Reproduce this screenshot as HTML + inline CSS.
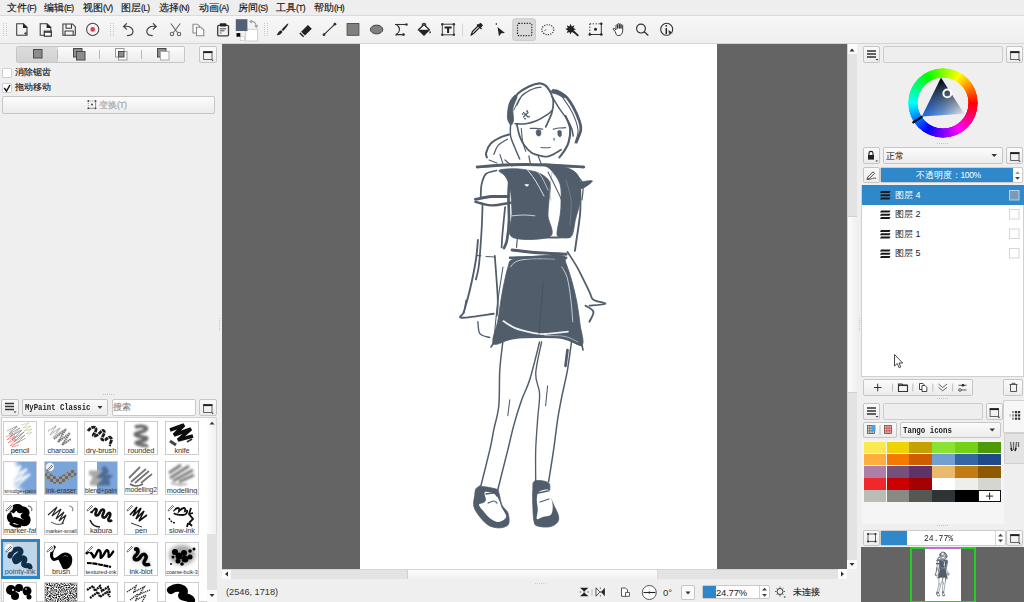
<!DOCTYPE html>
<html><head><meta charset="utf-8">
<style>
*{margin:0;padding:0;box-sizing:border-box}
html,body{width:1024px;height:602px;overflow:hidden;background:#efefef;font-family:"Liberation Sans",sans-serif;font-size:10px;color:#141414;position:relative}
.t{-webkit-text-stroke:0.15px currentColor}
.n{-webkit-text-stroke:0}
.a{position:absolute}
.btn{position:absolute;border:1px solid #c6c6c6;border-radius:2px;background:linear-gradient(#fbfbfb,#ececec)}
.fld{position:absolute;border:1px solid #c6c6c6;border-radius:2px;background:#fff}
.t{position:absolute;white-space:nowrap;line-height:1}
.k{font-size:8.6px;letter-spacing:-0.7px}
svg{position:absolute;overflow:visible}
</style></head><body>
<!-- menubar -->
<div class="a" style="left:0;top:0;width:1024px;height:16px;background:#eeeeee;border-bottom:1px solid #dadada"></div>
<div id="menu" style="font-size:9.6px">
<span class="t" style="left:7px;top:3px">文件<span class="k">(F)</span></span>
<span class="t" style="left:44px;top:3px">编辑<span class="k">(E)</span></span>
<span class="t" style="left:83px;top:3px">视图<span class="k">(V)</span></span>
<span class="t" style="left:121px;top:3px">图层<span class="k">(L)</span></span>
<span class="t" style="left:159px;top:3px">选择<span class="k">(N)</span></span>
<span class="t" style="left:199px;top:3px">动画<span class="k">(A)</span></span>
<span class="t" style="left:238px;top:3px">房间<span class="k">(S)</span></span>
<span class="t" style="left:276px;top:3px">工具<span class="k">(T)</span></span>
<span class="t" style="left:314px;top:3px">帮助<span class="k">(H)</span></span>
</div>
<!-- toolbar -->
<div class="a" style="left:0;top:16px;width:1024px;height:28px;background:linear-gradient(#f7f7f7,#efefef);border-bottom:1px solid #d4d4d4"></div>

<!-- canvas -->
<div class="a" style="left:222px;top:44px;width:625px;height:525px;background:#646464"></div>
<div class="a" style="left:360px;top:44px;width:357px;height:525px;background:#fff"></div>
<svg style="left:0;top:0" width="1024" height="602" viewBox="0 0 1024 602">
<g fill="none" stroke="#c8c8c8" stroke-width="1" stroke-dasharray="1 1">
<path d="M3.5 23V36M6.5 23V36"/>
<path d="M110.5 23V36M113.5 23V36"/>
<path d="M264.5 23V36M267.5 23V36"/>
</g>
<g fill="none" stroke="#3a3a3a" stroke-width="1.05" stroke-linejoin="miter">
<path d="M16.7 23.7H23.5L27 27.2V35.3H16.7Z"/>
<path d="M40.2 23.7H47L50.8 27.2V35.3H40.2Z"/>
<path d="M62.9 23.9H72.5L75.3 26.7V35.3H62.9Z"/>
<path d="M66 24V28.3H71.5V24"/>
<path d="M65 35.3V31H73.2V35.3"/>
<circle cx="92.7" cy="29.4" r="6.1" stroke="#454545"/>
</g>
<path d="M23 23.3L27.4 27.7V28H23Z" fill="#222"/>
<path d="M46.6 23.3L51.2 27.7V28H46.6Z" fill="#222"/>
<path d="M24.2 33.3H27.4M25.8 31.8V35" stroke="#555" stroke-width="1.2"/>
<rect x="44.3" y="31.2" width="7" height="5" fill="#fff" stroke="#333" stroke-width="1.2"/>
<path d="M44.3 32.2H51.3" stroke="#333" stroke-width="1.2"/>
<circle cx="92.7" cy="29.4" r="2.3" fill="#e23a50"/>
<!-- undo/redo -->
<g fill="none" stroke="#3a3a3a" stroke-width="1.15" stroke-linecap="round">
<path d="M124 26.5C130 25.5 133 28.5 133 31.3C133 34 131 35.6 127.5 35.6"/>
<path d="M126.5 23.6L123.6 26.5L126.5 29.2"/>
<path d="M155.8 26.5C149.8 25.5 146.8 28.5 146.8 31.3C146.8 34 148.8 35.6 152.3 35.6"/>
<path d="M153.3 23.6L156.2 26.5L153.3 29.2"/>
</g>
<!-- cut -->
<g fill="none" stroke="#666" stroke-width="1.1">
<path d="M170.8 23.5L177.5 32.5M180.2 23.5L173.5 32.5"/>
<circle cx="172" cy="34" r="1.7"/><circle cx="179" cy="34" r="1.7"/>
</g>
<!-- copy -->
<g fill="#fafafa" stroke="#8a8a8a" stroke-width="1.1">
<path d="M193 24.2H197.5L199.5 26.2V33H193Z"/>
<path d="M196.5 27.2H201L203.8 30V35.8H196.5Z"/>
</g>
<!-- paste -->
<rect x="217.7" y="25.3" width="10.8" height="10.5" rx="1" fill="#f4f4f4" stroke="#3a3a3a" stroke-width="1.3"/>
<rect x="219.8" y="23.3" width="6.6" height="3.2" rx="0.8" fill="#222"/>
<path d="M219.8 28.8H226.2M219.8 30.8H224.5" stroke="#444" stroke-width="1"/>
<path d="M219.8 33H221.6" stroke="#777" stroke-width="1.2"/>
<!-- colors -->
<rect x="245.6" y="29.3" width="12" height="11.7" fill="#fff" stroke="#d0d0d0" stroke-width="1"/>
<rect x="235.8" y="19.2" width="11.6" height="11.8" fill="#536073"/>
<rect x="240.3" y="36.6" width="4.2" height="4" fill="#fff" stroke="#cfcfcf" stroke-width="0.8"/>
<rect x="236.5" y="33.1" width="3.8" height="3.6" fill="#000"/>
<g fill="none" stroke="#a0a0a0" stroke-width="1.2">
<path d="M250.5 21.5C253.5 21.2 256 22 256.3 26.5"/>
<path d="M251.8 20.2L250 21.6L251.8 23M254.8 25.2L256.3 27.2L257.8 25.2"/>
</g>
<!-- brush -->
<path d="M288.3 23.5C287.8 23.2 285.5 25.2 281.6 29.7L283.1 31.1C286.5 27.6 288.7 24 288.3 23.5Z" fill="#222"/>
<path d="M281.1 30.3L282.5 31.7C281.8 33.5 279.5 35.2 276.8 35.3C277.5 33.5 279 31 281.1 30.3Z" fill="#222"/>
<!-- eraser -->
<path d="M307.9 24.9L311.8 28.8L305 35.6L301.1 31.7Z" fill="#222"/>
<path d="M300.4 32.5L304.2 36.3L303.2 37.2L299.3 33.4Z" fill="#222"/>
<!-- line -->
<path d="M324 34.7L334.9 24.2" stroke="#333" stroke-width="1.1"/>
<circle cx="324" cy="34.7" r="1.4" fill="#333"/><circle cx="334.9" cy="24.2" r="1.4" fill="#333"/>
<!-- rect -->
<rect x="347.1" y="23.5" width="11.8" height="11.8" fill="#808080" stroke="#555" stroke-width="1"/>
<ellipse cx="376.6" cy="29.5" rx="6.2" ry="4.4" fill="#808080" stroke="#444" stroke-width="1"/>
<!-- path -->
<g fill="none" stroke="#333" stroke-width="1.1">
<path d="M395 24.5H406.5"/>
<path d="M396.5 24.5C400.5 27.5 400.5 31.5 396.5 34.6H403.5"/>
</g>
<circle cx="406.5" cy="24.5" r="1.2" fill="#333"/><circle cx="403.5" cy="34.6" r="1.4" fill="#333"/><circle cx="396.5" cy="34.6" r="1" fill="#333"/>
<!-- fill -->
<g>
<circle cx="424" cy="25" r="1.8" fill="none" stroke="#333" stroke-width="1.1"/>
<path d="M418.5 29.8L424 24.6L429.3 29.8L424 35.2Z" fill="#fff" stroke="#222" stroke-width="1.3"/>
<path d="M418.5 29.8L429.3 29.8L424 35.2Z" fill="#222"/>
<path d="M430 30.8C430.8 32 431.2 33 430 33.6C428.8 33 429.3 32 430 30.8Z" fill="#222"/>
</g>
<!-- text tool -->
<rect x="442.3" y="24.2" width="11.6" height="10.6" fill="none" stroke="#444" stroke-width="1"/>
<g fill="#333"><circle cx="442.3" cy="24.2" r="1.2"/><circle cx="453.9" cy="24.2" r="1.2"/><circle cx="442.3" cy="34.8" r="1.2"/><circle cx="453.9" cy="34.8" r="1.2"/></g>
<path d="M444.6 26.5H451.6V28.5H449.1V33H447.1V28.5H444.6Z" fill="#222"/>
<path d="M462.6 23.5V36.5" stroke="#d6d6d6" stroke-width="1"/>
<!-- picker -->
<path d="M471 35.2L472.5 31.5L479 25L480.5 26.5L474 33Z" fill="#fff" stroke="#222" stroke-width="1.2" stroke-linejoin="round"/>
<path d="M478 24.8L480.6 22.8L483 25.2L481 27.8Z" fill="#222"/>
<path d="M477 24.5L481.5 29" stroke="#222" stroke-width="1.3"/>
<!-- select shape -->
<path d="M497.5 27L505 33L501.2 33.3L499 36.2Z" fill="#222"/>
<path d="M496.3 23V25" stroke="#333" stroke-width="1"/>
<!-- active rect select -->
<rect x="512.8" y="18.8" width="22.6" height="21.6" rx="2" fill="#dadada" stroke="#c8c8c8" stroke-width="1"/>
<rect x="517.5" y="23.3" width="14.3" height="12.3" rx="1.3" fill="none" stroke="#2a2a2a" stroke-width="1.2" stroke-dasharray="1.3 1.3"/>
<ellipse cx="547.8" cy="29.7" rx="6" ry="5" fill="none" stroke="#333" stroke-width="1.1" stroke-dasharray="1.2 1.2"/>
<path d="M544.5 31L546 29.3" stroke="#555" stroke-width="0.9"/>
<!-- wand -->
<path d="M570.6 23.8L571.7 26.4L574.5 25.2L573.4 28L576 29.2L573.3 30.3L574.3 33L571.6 31.9L570.5 34.5L569.4 31.9L566.7 33L567.8 30.3L565.2 29.1L567.8 28L566.7 25.3L569.4 26.4Z" fill="#222"/>
<path d="M572 30L577.8 35.4" stroke="#222" stroke-width="1.8" stroke-linecap="round"/>
<!-- transform -->
<g fill="none" stroke="#333" stroke-width="1">
<path d="M601.3 23.8V34.5H589.8"/>
<path d="M589.8 23.8H601.3M589.8 23.8V34.5" stroke-dasharray="1.3 1.6"/>
</g>
<g fill="#222"><circle cx="601.3" cy="23.8" r="1.2"/><circle cx="601.3" cy="34.5" r="1.3"/><circle cx="589.8" cy="34.5" r="1.3"/><circle cx="595.5" cy="29.3" r="1.5"/></g>
<!-- hand -->
<path d="M615.3 31.5L613.2 29.5C612.6 28.8 613.6 27.9 614.3 28.5L616 30V25.6C616 24.6 617.6 24.6 617.6 25.6V28.5V24.4C617.6 23.4 619.3 23.4 619.3 24.4V28.5V24.6C619.3 23.6 621 23.6 621 24.6V28.5V25.5C621 24.6 622.7 24.6 622.7 25.5V30.5C622.7 33 621.3 35.5 618.8 35.5H617.6C616.5 35.5 616 34 615.3 31.5Z" fill="#fff" stroke="#333" stroke-width="1"/>
<!-- zoom -->
<circle cx="641" cy="28.6" r="4.4" fill="none" stroke="#333" stroke-width="1.2"/>
<path d="M644.2 31.8L648.3 35.6" stroke="#333" stroke-width="1.3"/>
<!-- info -->
<circle cx="666.7" cy="29.3" r="6" fill="none" stroke="#333" stroke-width="1.1"/>
<path d="M666.3 28V34" stroke="#222" stroke-width="1.5"/>
<circle cx="666.3" cy="25.8" r="0.9" fill="#222"/>
<path d="M668 29.5L673.5 33.2L670.8 33.6L669.5 36.2Z" fill="#222" stroke="#fff" stroke-width="0.5"/>
</svg>

<!-- tool options -->
<div class="btn" style="left:16px;top:46px;width:169px;height:17px"></div>
<div class="a" style="left:17px;top:47px;width:41px;height:15px;background:linear-gradient(#dcdcdc,#d2d2d2)"></div>
<div class="a" style="left:57px;top:50px;width:1px;height:9px;background:#b8b8b8"></div>
<div class="a" style="left:99px;top:50px;width:1px;height:9px;background:#b8b8b8"></div>
<div class="a" style="left:141px;top:50px;width:1px;height:9px;background:#b8b8b8"></div>
<div class="btn" style="left:199px;top:46px;width:18px;height:17px"></div>
<svg style="left:0;top:0" width="1" height="1">
<rect x="33.5" y="49.5" width="8.5" height="8.5" fill="#8c8c8c" stroke="#4a4a4a" stroke-width="1"/>
<rect x="73.5" y="48.5" width="8.5" height="8.5" fill="#8c8c8c" stroke="#4a4a4a" stroke-width="1"/>
<rect x="76.5" y="51.5" width="8.5" height="8.5" fill="#8c8c8c" stroke="#4a4a4a" stroke-width="1"/>
<rect x="115.5" y="48.5" width="8.5" height="8.5" fill="#fafafa" stroke="#9a9a9a" stroke-width="1"/>
<rect x="118.5" y="51.5" width="8.5" height="8.5" fill="#fafafa" stroke="#9a9a9a" stroke-width="1"/>
<rect x="118.5" y="51.5" width="5.5" height="5.5" fill="#8c8c8c" stroke="#4a4a4a" stroke-width="1"/>
<rect x="157.5" y="48.5" width="8.5" height="8.5" fill="#8c8c8c" stroke="#4a4a4a" stroke-width="1"/>
<rect x="160.5" y="51.5" width="8.5" height="8.5" fill="#fcfcfc" stroke="#aaa" stroke-width="1"/>
<rect x="203.6" y="51.7" width="8.4" height="7.8" fill="none" stroke="#555" stroke-width="0.9"/><rect x="203.2" y="51.2" width="9.2" height="1.9" fill="#222"/><path d="M211.2 59.8H213.8L212.5 61.2Z" fill="#444"/>
</svg>
<div class="a" style="left:2px;top:68px;width:10px;height:10px;background:#fff;border:1px solid #cfcfcf;border-radius:1px"></div>
<div class="a" style="left:2px;top:83px;width:10px;height:10px;background:#fff;border:1px solid #cfcfcf;border-radius:1px"></div>
<svg style="left:0;top:0" width="1" height="1"><path d="M4.3 88L6.5 91.2L10 85" fill="none" stroke="#111" stroke-width="1.4"/></svg>
<span class="t" style="left:15px;top:68px;font-size:9px">消除锯齿</span>
<span class="t" style="left:15px;top:83px;font-size:9px">拖动移动</span>
<div class="btn" style="left:2px;top:96px;width:213px;height:18px"></div>
<svg style="left:0;top:0" width="1" height="1">
<g fill="none" stroke="#777" stroke-width="0.8"><path d="M95.6 101V108.3H88.3" /><path d="M88.3 101H95.6M88.3 101V108.3" stroke-dasharray="1 1"/></g>
<g fill="#444"><circle cx="88.3" cy="101" r="0.9"/><circle cx="95.6" cy="101" r="0.9"/><circle cx="88.3" cy="108.3" r="0.9"/><circle cx="95.6" cy="108.3" r="0.9"/><circle cx="92" cy="104.6" r="1"/></g>
</svg>
<span class="t" style="left:99px;top:101px;font-size:9px;color:#a8a8a8">变换<span class="k" style="font-size:9px">(T)</span></span>

<!-- brush presets docker -->
<svg style="left:0;top:0" width="1" height="1"><path d="M103 394.5H115" stroke="#c4c4c4" stroke-width="1" stroke-dasharray="1 1"/></svg>
<div class="btn" style="left:1px;top:399px;width:18px;height:17px"></div>
<svg style="left:0;top:0" width="1" height="1"><path d="M5 403.5H14M5 406.5H14M5 409.5H14" stroke="#333" stroke-width="1.3"/><path d="M13.5 411.5H16.5L15 413Z" fill="#333"/></svg>
<div class="btn" style="left:22px;top:399px;width:86px;height:17px"></div>
<span class="t n" style="left:24.5px;top:403px;font-family:'Liberation Mono',monospace;font-size:9.5px;font-weight:bold;color:#222;transform:scaleX(0.765);transform-origin:0 0">MyPaint Classic</span>
<svg style="left:0;top:0" width="1" height="1"><path d="M97.5 406L102.5 406L100 409Z" fill="#333"/></svg>
<div class="fld" style="left:112px;top:399px;width:84px;height:17px;border-color:#c8c8c8"></div>
<span class="t" style="left:113px;top:403px;font-size:9px;color:#888">搜索</span>
<div class="btn" style="left:199px;top:399px;width:18px;height:17px"></div>
<svg style="left:0;top:0" width="1" height="1"><rect x="203.6" y="404.7" width="8.4" height="7.8" fill="none" stroke="#555" stroke-width="0.9"/><rect x="203.2" y="404.2" width="9.2" height="1.9" fill="#222"/><path d="M211.2 412.8H213.8L212.5 414.2Z" fill="#444"/></svg>
<div class="a" style="left:1px;top:417px;width:216px;height:185px;background:#fff;border:1px solid #d2d2d2"></div>
<!-- scrollbar -->
<div class="a" style="left:207px;top:418px;width:10px;height:184px;background:#e2e2e2"></div>
<div class="a" style="left:207px;top:418px;width:10px;height:116px;background:linear-gradient(90deg,#fdfdfd,#f0f0f0);border-right:1px solid #d8d8d8"></div>
<div class="a" style="left:207px;top:590px;width:10px;height:12px;background:#fafafa"></div>
<svg style="left:0;top:0" width="1" height="1"><path d="M209.5 424.5H214.5L212 421.8Z" fill="#333"/><path d="M209.5 594H214.5L212 597Z" fill="#333"/></svg>
<svg style="left:0;top:0" width="0" height="0"><defs><filter id="bl05" x="-20%" y="-20%" width="140%" height="140%"><feGaussianBlur stdDeviation="0.5"/></filter><filter id="bl1" x="-30%" y="-30%" width="160%" height="160%"><feGaussianBlur stdDeviation="1"/></filter><filter id="bl2" x="-30%" y="-30%" width="160%" height="160%"><feGaussianBlur stdDeviation="2"/></filter><filter id="noise"><feTurbulence type="fractalNoise" baseFrequency="0.9" numOctaves="1" seed="3"/><feColorMatrix type="matrix" values="0 0 0 0 0  0 0 0 0 0  0 0 0 0 0  0 0 0 -2.6 1.7"/></filter></defs></svg>
<div class="a" style="left:3px;top:421px;width:34px;height:34px;border:1px solid #cdcdcd;background:#fff;overflow:hidden">
<svg style="left:-1px;top:-1px" width="34" height="34" viewBox="0 0 34 34"><g fill="none" stroke-width="0.6"><path d="M4 10L14 5L6 13L17 7L7 16L19 9L9 19L21 11L11 21L22 14L14 22L23 17" stroke="#777"/><path d="M6 11L15 6M8 15L18 9M10 18L20 12" stroke="#999"/><path d="M3 16L10 12L4 19L12 15L5 22L13 18L7 25L15 21L9 26L16 24" stroke="#d66"/><path d="M18 4L26 2L20 7L28 5L21 10L29 8L23 13L29 11L25 15" stroke="#b8c98a"/></g></svg>
<span class="t n" style="left:0;width:32px;text-align:center;top:24.7px;font-size:7.4px;color:#333;letter-spacing:-0.1px">pencil</span>
</div>
<div class="a" style="left:44px;top:421px;width:34px;height:34px;border:1px solid #cdcdcd;background:#fff;overflow:hidden">
<svg style="left:-1px;top:-1px" width="34" height="34" viewBox="0 0 34 34"><g fill="none" stroke="#555" opacity="0.8"><path d="M4 10L12 5L6 14L16 7L9 17L19 9" stroke-width="1.5" stroke-dasharray="1 .7" opacity="0.6"/><path d="M10 18L22 8L14 21L26 12L18 24L27 18" stroke-width="2" stroke-dasharray="1.5 .6"/></g></svg>
<span class="t n" style="left:0;width:32px;text-align:center;top:24.7px;font-size:7.4px;color:#333;letter-spacing:-0.1px">charcoal</span>
</div>
<div class="a" style="left:84px;top:421px;width:34px;height:34px;border:1px solid #cdcdcd;background:#fff;overflow:hidden">
<svg style="left:-1px;top:-1px" width="34" height="34" viewBox="0 0 34 34"><g filter="url(#bl05)"><path d="M4 10C7 5 13 5 12 9C11 13 7 15 11 15C15 15 18 7 20 10C22 13 15 18 19 19C23 20 24 14 27 17C29 20 24 24 27 24" fill="none" stroke="#1a1a1a" stroke-width="2.8" stroke-dasharray="4 .7"/></g></svg>
<span class="t n" style="left:0;width:32px;text-align:center;top:24.7px;font-size:7.4px;color:#333;letter-spacing:-0.1px">dry-brush</span>
</div>
<div class="a" style="left:124px;top:421px;width:34px;height:34px;border:1px solid #cdcdcd;background:#fff;overflow:hidden">
<svg style="left:-1px;top:-1px" width="34" height="34" viewBox="0 0 34 34"><g filter="url(#bl1)"><path d="M11 6C20 4 26 7 20 10C13 12 8 13 14 15C20 17 26 16 21 19C16 21 9 21 14 23C19 25 24 24 22 26" fill="none" stroke="#6a6a6a" stroke-width="3.6"/></g></svg>
<span class="t n" style="left:0;width:32px;text-align:center;top:24.7px;font-size:7.4px;color:#333;letter-spacing:-0.1px">rounded</span>
</div>
<div class="a" style="left:165px;top:421px;width:34px;height:34px;border:1px solid #cdcdcd;background:#fff;overflow:hidden">
<svg style="left:-1px;top:-1px" width="34" height="34" viewBox="0 0 34 34"><g filter="url(#bl05)"><path d="M5 9L19 4L9 14L26 8L13 19L28 15" fill="none" stroke="#111" stroke-width="3.6" stroke-linejoin="bevel"/><path d="M5 20L11 24" stroke="#444" stroke-width="3"/><path d="M22 21L27 18" stroke="#333" stroke-width="2"/></g></svg>
<span class="t n" style="left:0;width:32px;text-align:center;top:24.7px;font-size:7.4px;color:#333;letter-spacing:-0.1px">knife</span>
</div>
<div class="a" style="left:3px;top:461px;width:34px;height:34px;border:1px solid #cdcdcd;background:#fff;overflow:hidden">
<svg style="left:-1px;top:-1px" width="34" height="34" viewBox="0 0 34 34"><rect x="0" y="0" width="34" height="34" fill="#7ba4d8"/><g filter="url(#bl2)"><path d="M-2 -2H12L16 10L12 24L20 30V36H-2Z" fill="#fff"/></g><g filter="url(#bl1)"><path d="M4 12L18 5L9 16L24 8L12 21L27 13L14 25" fill="none" stroke="#fff" stroke-width="2.2" opacity="0.9"/></g></svg>
<span class="t n" style="left:0;width:32px;text-align:center;top:26.9px;font-size:5.2px;color:#333;letter-spacing:-0.1px">smudge+paint</span>
</div>
<div class="a" style="left:44px;top:461px;width:34px;height:34px;border:1px solid #cdcdcd;background:#fff;overflow:hidden">
<svg style="left:-1px;top:-1px" width="34" height="34" viewBox="0 0 34 34"><rect x="0" y="0" width="34" height="34" fill="#7ba4d8"/><defs><pattern id="chk" width="6" height="6" patternUnits="userSpaceOnUse"><rect width="6" height="6" fill="#9a9a9a"/><rect width="3" height="3" fill="#6a6a6a"/><rect x="3" y="3" width="3" height="3" fill="#6a6a6a"/></pattern></defs><path d="M4 15C8 18 12 21 17 19C22 17 25 13 29 12" fill="none" stroke="url(#chk)" stroke-width="7" stroke-linecap="round"/><circle cx="6" cy="6" r="4.2" fill="#fff" opacity="0.85"/><path d="M3.5 8.5L8 4M4.5 9.5L9 5M3.5 8.5L3 10L4.5 9.5" stroke="#666" stroke-width="0.9" fill="none"/></svg>
<span class="t n" style="left:0;width:32px;text-align:center;top:25.1px;font-size:7px;color:#333;letter-spacing:-0.1px">ink-eraser</span>
</div>
<div class="a" style="left:84px;top:461px;width:34px;height:34px;border:1px solid #cdcdcd;background:#fff;overflow:hidden">
<svg style="left:-1px;top:-1px" width="34" height="34" viewBox="0 0 34 34"><rect x="13" y="0" width="21" height="34" fill="#7ba4d8"/><g filter="url(#bl1)"><path d="M5 12H18M8 17H20M6 22H16" stroke="#aaa" stroke-width="5"/><path d="M19 6L22 10L17 15L24 16L18 22L26 22" fill="none" stroke="#4d6d96" stroke-width="5"/></g></svg>
<span class="t n" style="left:0;width:32px;text-align:center;top:25.5px;font-size:6.6px;color:#333;letter-spacing:-0.1px">blend+paint</span>
</div>
<div class="a" style="left:124px;top:461px;width:34px;height:34px;border:1px solid #cdcdcd;background:#fff;overflow:hidden">
<svg style="left:-1px;top:-1px" width="34" height="34" viewBox="0 0 34 34"><g filter="url(#bl05)" fill="none"><path d="M5 17L16 6M7 21L22 8M11 22L25 10M17 22L28 13" stroke="#777" stroke-width="1.8"/><path d="M6 23C10 26 15 25 19 23" stroke="#666" stroke-width="1.6"/></g></svg>
<span class="t n" style="left:0;width:32px;text-align:center;top:25.3px;font-size:6.8px;color:#333;letter-spacing:-0.1px">modelling2</span>
</div>
<div class="a" style="left:165px;top:461px;width:34px;height:34px;border:1px solid #cdcdcd;background:#fff;overflow:hidden">
<svg style="left:-1px;top:-1px" width="34" height="34" viewBox="0 0 34 34"><g filter="url(#bl1)" fill="none"><path d="M4 12L16 4M5 17L24 5M8 20L28 9M14 21L29 14" stroke="#7a7a7a" stroke-width="2.8"/><path d="M6 22C11 24 17 24 22 23" stroke="#777" stroke-width="1.2"/></g></svg>
<span class="t n" style="left:0;width:32px;text-align:center;top:24.7px;font-size:7.4px;color:#333;letter-spacing:-0.1px">modelling</span>
</div>
<div class="a" style="left:3px;top:501px;width:34px;height:34px;border:1px solid #cdcdcd;background:#fff;overflow:hidden">
<svg style="left:-1px;top:-1px" width="34" height="34" viewBox="0 0 34 34"><path d="M8 11C11 5 18 5 17 9C22 7 26 12 21 15C26 17 25 22 21 22C17 22 13 18 10 19C7 19 6 15 9 14" fill="none" stroke="#000" stroke-width="6.5" stroke-linejoin="round"/><path d="M7 22C10 25 14 26 18 25" stroke="#000" stroke-width="2.6" fill="none"/><path d="M25 5C28 5 30 8 28 10" stroke="#888" stroke-width="1.4" fill="none"/><circle cx="6" cy="6" r="4.2" fill="#fff" opacity="0.85"/><path d="M3.5 8.5L8 4M4.5 9.5L9 5M3.5 8.5L3 10L4.5 9.5" stroke="#666" stroke-width="0.9" fill="none"/></svg>
<span class="t n" style="left:0;width:32px;text-align:center;top:24.7px;font-size:7.4px;color:#333;letter-spacing:-0.1px">marker-fat</span>
</div>
<div class="a" style="left:44px;top:501px;width:34px;height:34px;border:1px solid #cdcdcd;background:#fff;overflow:hidden">
<svg style="left:-1px;top:-1px" width="34" height="34" viewBox="0 0 34 34"><path d="M4 14L13 6L8 15L17 8L12 18L20 11L15 20L22 14L18 23" fill="none" stroke="#222" stroke-width="1.1"/><path d="M7 21C12 24 16 24 20 22" stroke="#333" stroke-width="0.9" fill="none"/><path d="M25 5C28 5 30 8 28 10" stroke="#888" stroke-width="1.2" fill="none"/></svg>
<span class="t n" style="left:0;width:32px;text-align:center;top:26.5px;font-size:5.6px;color:#333;letter-spacing:-0.1px">marker-small</span>
</div>
<div class="a" style="left:84px;top:501px;width:34px;height:34px;border:1px solid #cdcdcd;background:#fff;overflow:hidden">
<svg style="left:-1px;top:-1px" width="34" height="34" viewBox="0 0 34 34"><path d="M7 12C10 6 14 7 12 11C10 15 14 16 16 11C18 7 22 8 19 13C17 17 21 18 23 14C25 10 28 12 25 17C23 20 26 21 28 19" fill="none" stroke="#111" stroke-width="2.6"/><path d="M6 19C8 24 12 26 16 26" stroke="#222" stroke-width="1.6" fill="none"/><circle cx="6" cy="6" r="4.2" fill="#fff" opacity="0.85"/><path d="M3.5 8.5L8 4M4.5 9.5L9 5M3.5 8.5L3 10L4.5 9.5" stroke="#666" stroke-width="0.9" fill="none"/></svg>
<span class="t n" style="left:0;width:32px;text-align:center;top:24.7px;font-size:7.4px;color:#333;letter-spacing:-0.1px">kabura</span>
</div>
<div class="a" style="left:124px;top:501px;width:34px;height:34px;border:1px solid #cdcdcd;background:#fff;overflow:hidden">
<svg style="left:-1px;top:-1px" width="34" height="34" viewBox="0 0 34 34"><path d="M6 14L13 6L9 15L17 7L12 18L20 10L15 20L23 14" fill="none" stroke="#111" stroke-width="1.6"/><path d="M7 22L18 26" stroke="#333" stroke-width="1" fill="none"/><circle cx="6" cy="6" r="4.2" fill="#fff" opacity="0.85"/><path d="M3.5 8.5L8 4M4.5 9.5L9 5M3.5 8.5L3 10L4.5 9.5" stroke="#666" stroke-width="0.9" fill="none"/></svg>
<span class="t n" style="left:0;width:32px;text-align:center;top:24.7px;font-size:7.4px;color:#333;letter-spacing:-0.1px">pen</span>
</div>
<div class="a" style="left:165px;top:501px;width:34px;height:34px;border:1px solid #cdcdcd;background:#fff;overflow:hidden">
<svg style="left:-1px;top:-1px" width="34" height="34" viewBox="0 0 34 34"><path d="M8 10C12 6 15 6 14 10C18 6 21 6 20 10C24 8 22 14 18 14C14 14 10 14 9 12M26 7L24 13L28 18L24 22M24 13L28 12M24 22L27 25M23 22L22 26" fill="none" stroke="#111" stroke-width="1.8"/><path d="M4 17C5 20 8 22 11 22" stroke="#111" stroke-width="1.4" fill="none" stroke-dasharray="2 1"/><circle cx="6" cy="6" r="4.2" fill="#fff" opacity="0.85"/><path d="M3.5 8.5L8 4M4.5 9.5L9 5M3.5 8.5L3 10L4.5 9.5" stroke="#666" stroke-width="0.9" fill="none"/></svg>
<span class="t n" style="left:0;width:32px;text-align:center;top:24.7px;font-size:7.4px;color:#333;letter-spacing:-0.1px">slow-ink</span>
</div>
<div class="a" style="left:1px;top:539px;width:39px;height:40px;border:3px solid #2c83c6;background:#bcd6ec"></div>
<div class="a" style="left:3px;top:542px;width:34px;height:34px;border:1px solid #cdcdcd;background:#bcd6ec;overflow:hidden">
<svg style="left:-1px;top:-1px" width="34" height="34" viewBox="0 0 34 34"><path d="M7 14C9 7 17 5 18 9C19 13 9 14 12 19C14 22 18 14 21 16C24 18 19 21 21 23C23 25 26 22 27 25" fill="none" stroke="#0f2e47" stroke-width="5" stroke-linejoin="round" stroke-linecap="round"/><circle cx="6" cy="6" r="4.2" fill="#fff" opacity="0.85"/><path d="M3.5 8.5L8 4M4.5 9.5L9 5M3.5 8.5L3 10L4.5 9.5" stroke="#666" stroke-width="0.9" fill="none"/></svg>
<span class="t n" style="left:0;width:32px;text-align:center;top:24.7px;font-size:7.4px;color:#3a5570;letter-spacing:-0.1px">pointy-ink</span>
</div>
<div class="a" style="left:44px;top:542px;width:34px;height:34px;border:1px solid #cdcdcd;background:#fff;overflow:hidden">
<svg style="left:-1px;top:-1px" width="34" height="34" viewBox="0 0 34 34"><path d="M11 4C8 7 6 14 9 17C12 20 17 12 21 12C26 12 28 16 26 22C24 26 20 27 19 24C18 21 22 18 19 16" fill="none" stroke="#000" stroke-width="3"/><path d="M14 17C17 14 22 13 25 15C28 18 25 25 21 26C17 25 16 20 14 17Z" fill="#000"/><circle cx="6" cy="6" r="4.2" fill="#fff" opacity="0.85"/><path d="M3.5 8.5L8 4M4.5 9.5L9 5M3.5 8.5L3 10L4.5 9.5" stroke="#666" stroke-width="0.9" fill="none"/></svg>
<span class="t n" style="left:0;width:32px;text-align:center;top:24.7px;font-size:7.4px;color:#333;letter-spacing:-0.1px">brush</span>
</div>
<div class="a" style="left:84px;top:542px;width:34px;height:34px;border:1px solid #cdcdcd;background:#fff;overflow:hidden">
<svg style="left:-1px;top:-1px" width="34" height="34" viewBox="0 0 34 34"><path d="M2 12C4 9 6 9 8 12S9 17 11 14S14 6 16 9S15 18 18 15S22 6 24 9S23 17 26 14S28 10 30 9" fill="none" stroke="#000" stroke-width="2.4"/><path d="M3 21C10 21 18 23 27 25" fill="none" stroke="#000" stroke-width="2.2" stroke-dasharray="5 .6"/><circle cx="6" cy="6" r="4.2" fill="#fff" opacity="0.85"/><path d="M3.5 8.5L8 4M4.5 9.5L9 5M3.5 8.5L3 10L4.5 9.5" stroke="#666" stroke-width="0.9" fill="none"/></svg>
<span class="t n" style="left:0;width:32px;text-align:center;top:25.9px;font-size:6.2px;color:#333;letter-spacing:-0.1px">textured-ink</span>
</div>
<div class="a" style="left:124px;top:542px;width:34px;height:34px;border:1px solid #cdcdcd;background:#fff;overflow:hidden">
<svg style="left:-1px;top:-1px" width="34" height="34" viewBox="0 0 34 34"><g filter="url(#bl05)"><path d="M10 8C14 4 16 10 11 14C8 18 14 20 17 14C20 10 24 14 21 18C18 22 22 24 26 22" fill="none" stroke="#000" stroke-width="3.5"/></g><g filter="url(#bl2)"><path d="M10 8C14 4 16 10 11 14C8 18 14 20 17 14C20 10 24 14 21 18C18 22 22 24 26 22" fill="none" stroke="#000" stroke-width="3" opacity="0.35"/></g><circle cx="6" cy="6" r="4.2" fill="#fff" opacity="0.85"/><path d="M3.5 8.5L8 4M4.5 9.5L9 5M3.5 8.5L3 10L4.5 9.5" stroke="#666" stroke-width="0.9" fill="none"/></svg>
<span class="t n" style="left:0;width:32px;text-align:center;top:24.7px;font-size:7.4px;color:#333;letter-spacing:-0.1px">ink-blot</span>
</div>
<div class="a" style="left:165px;top:542px;width:34px;height:34px;border:1px solid #cdcdcd;background:#fff;overflow:hidden">
<svg style="left:-1px;top:-1px" width="34" height="34" viewBox="0 0 34 34"><g filter="url(#bl2)"><ellipse cx="17" cy="13" rx="13" ry="10" fill="#000" opacity="0.35"/></g><g fill="#000" filter="url(#bl05)"><circle cx="10" cy="10" r="3"/><circle cx="14" cy="14" r="3.5"/><circle cx="19" cy="11" r="3"/><circle cx="13" cy="19" r="2.5"/><circle cx="20" cy="17" r="3.5"/><circle cx="25" cy="9" r="1.8"/><circle cx="29" cy="7" r="1.5"/><circle cx="25" cy="15" r="2.5"/><circle cx="17" cy="22" r="1.8"/><circle cx="6" cy="22" r="1"/><circle cx="8" cy="15" r="1.5"/></g></svg>
<span class="t n" style="left:0;width:32px;text-align:center;top:26.7px;font-size:5.4px;color:#333;letter-spacing:-0.1px">coarse-bulk-3</span>
</div>
<div class="a" style="left:3px;top:582px;width:34px;height:34px;border:1px solid #cdcdcd;background:#fff;overflow:hidden">
<svg style="left:-1px;top:-1px" width="34" height="34" viewBox="0 0 34 34"><g filter="url(#bl05)" fill="#000"><circle cx="8" cy="8" r="5"/><circle cx="16" cy="6" r="4"/><circle cx="24" cy="9" r="4.5"/><circle cx="12" cy="14" r="4"/><circle cx="26" cy="15" r="2.5"/></g><g fill="#fff"><circle cx="10" cy="8" r="1"/><circle cx="18" cy="10" r="1.2"/><circle cx="23" cy="7" r="0.8"/></g></svg>
</div>
<div class="a" style="left:44px;top:582px;width:34px;height:34px;border:1px solid #cdcdcd;background:#fff;overflow:hidden">
<svg style="left:-1px;top:-1px" width="34" height="34" viewBox="0 0 34 34"><rect x="1" y="1" width="32" height="22" fill="#222" filter="url(#noise)"/></svg>
</div>
<div class="a" style="left:84px;top:582px;width:34px;height:34px;border:1px solid #cdcdcd;background:#fff;overflow:hidden">
<svg style="left:-1px;top:-1px" width="34" height="34" viewBox="0 0 34 34"><path d="M3 8L9 4L11 9L16 4L18 9L24 5L26 11M6 16L14 10L16 15L23 10L26 15" fill="none" stroke="#111" stroke-width="2.2" stroke-dasharray="2 .6"/></svg>
</div>
<div class="a" style="left:124px;top:582px;width:34px;height:34px;border:1px solid #cdcdcd;background:#fff;overflow:hidden">
<svg style="left:-1px;top:-1px" width="34" height="34" viewBox="0 0 34 34"><path d="M3 10L12 4L10 10L20 5L16 12L26 8M6 18L14 12L12 18L22 13L18 20" fill="none" stroke="#333" stroke-width="1.5" stroke-dasharray="1.2 .8"/></svg>
</div>
<div class="a" style="left:165px;top:582px;width:34px;height:34px;border:1px solid #cdcdcd;background:#fff;overflow:hidden">
<svg style="left:-1px;top:-1px" width="34" height="34" viewBox="0 0 34 34"><path d="M6 8C12 4 22 6 18 12C14 16 24 14 26 18" fill="none" stroke="#000" stroke-width="8" stroke-linecap="round"/></svg>
</div>

<!-- v scrollbar -->
<div class="a" style="left:847px;top:44px;width:10px;height:525px;background:#e3e3e3"></div>
<div class="a" style="left:847px;top:44px;width:10px;height:10px;background:#fbfbfb"></div>
<div class="a" style="left:847px;top:216px;width:10px;height:177px;background:linear-gradient(90deg,#fefefe,#f0f0f0);border-top:1px solid #d0d0d0;border-bottom:1px solid #d0d0d0"></div>
<div class="a" style="left:847px;top:44px;width:1px;height:525px;background:#d4d4d4"></div>
<div class="a" style="left:847px;top:560px;width:10px;height:9px;background:#fbfbfb"></div>
<!-- h scrollbar -->
<div class="a" style="left:222px;top:569px;width:625px;height:10px;background:#e3e3e3"></div>
<div class="a" style="left:222px;top:569px;width:9px;height:10px;background:#fbfbfb"></div>
<div class="a" style="left:407px;top:569px;width:251px;height:10px;background:linear-gradient(#fefefe,#f0f0f0);border-left:1px solid #d0d0d0;border-right:1px solid #d8d8d8"></div>
<div class="a" style="left:222px;top:569px;width:625px;height:1px;background:#d4d4d4"></div>
<div class="a" style="left:838px;top:569px;width:9px;height:10px;background:#fbfbfb"></div>
<svg style="left:0;top:0" width="1" height="1">
<path d="M849.5 51.5H854.5L852 48.5Z" fill="#333"/>
<path d="M849.5 563H854.5L852 566Z" fill="#333"/>
<path d="M228 571.5V576.5L225 574Z" fill="#333"/>
<path d="M841 571.5V576.5L844 574Z" fill="#333"/>
<path d="M535 583.5H546" stroke="#cfcfcf" stroke-width="1" stroke-dasharray="1 1"/>
<path d="M219.5 318V331" stroke="#c8c8c8" stroke-width="1" stroke-dasharray="1 1"/>
<path d="M859.5 318V331" stroke="#c8c8c8" stroke-width="1" stroke-dasharray="1 1"/>
</svg>
<!-- status bar -->
<span class="t n" style="left:226px;top:588px;font-size:9.2px;color:#333">(2546, 1718)</span>
<svg style="left:0;top:0" width="1" height="1">
<!-- mirror icons -->
<path d="M580 587.8H588.5L584.2 591.5Z" fill="#222"/>
<path d="M580 596.2H588.5L584.2 592.5Z" fill="#222"/>
<path d="M579.5 592H581.2M583.2 592H585.2M587.2 592H589" stroke="#555" stroke-width="0.8"/>
<path d="M592 589V596" stroke="#bbb" stroke-width="1"/>
<path d="M596 587.8V596.2L599.8 592Z" fill="#fff" stroke="#222" stroke-width="0.8"/>
<path d="M604.8 587.8V596.2L601 592Z" fill="#222"/>
<path d="M600.4 587.5V589M600.4 591V593M600.4 595V596.5" stroke="#555" stroke-width="0.8"/>
<!-- page icon -->
<path d="M621.5 588H625.5L627.5 590V596.3H621.5Z" fill="#fff" stroke="#555" stroke-width="1"/>
<path d="M625.5 592.5H629.5V596.3H625.5Z" fill="#fff" stroke="#555" stroke-width="0.9"/>
<!-- rotation -->
<circle cx="649.3" cy="592.5" r="7" fill="#fff" stroke="#444" stroke-width="0.9"/>
<path d="M643.5 592.5H655.5" stroke="#222" stroke-width="1.1"/>
<path d="M649.3 586.5V598.5" stroke="#bbb" stroke-width="0.7" stroke-dasharray="1 1"/>
<circle cx="649.3" cy="592.5" r="1" fill="#222"/>
</svg>
<span class="t n" style="left:663px;top:588px;font-size:9.5px;color:#333">0°</span>
<div class="btn" style="left:681px;top:585px;width:14px;height:15px;background:#fafafa"></div>
<svg style="left:0;top:0" width="1" height="1"><path d="M685.5 591.5H690.5L688 594.5Z" fill="#333"/></svg>
<div class="fld" style="left:702px;top:585px;width:68px;height:14px;border-color:#c9c9c9"></div>
<div class="a" style="left:703px;top:586px;width:13px;height:12px;background:#2f86c8"></div>
<span class="t n" style="left:716px;top:588px;font-size:9.5px;color:#222;letter-spacing:-0.2px">24.77%</span>
<div class="a" style="left:759px;top:586px;width:1px;height:12px;background:#d0d0d0"></div>
<svg style="left:0;top:0" width="1" height="1">
<path d="M762 590.5H767L764.5 587.8Z" fill="#444"/><path d="M762 594H767L764.5 596.8Z" fill="#444"/>
<!-- brightness -->
<circle cx="780" cy="591.5" r="3" fill="none" stroke="#333" stroke-width="1"/>
<path d="M780 586.5V587.8M780 595.2V596.5M775 591.5H776.3M783.7 591.5H785M776.5 588L777.3 588.8M782.7 594.2L783.5 595M776.5 595L777.3 594.2M782.7 588.8L783.5 588" stroke="#333" stroke-width="0.8"/>
<path d="M783.5 596.5H786L784.7 598Z" fill="#333"/>
</svg>
<span class="t" style="left:793px;top:588px;font-size:9px;color:#222">未连接</span>

<svg style="left:0;top:0" width="1" height="1"><g fill="#515d6b" stroke="#515d6b" stroke-width="0.8" stroke-linejoin="round">
<path d="M507.5 118.0C507.2 114.5 507.9 107.7 509.0 104.0C510.1 100.3 512.7 97.2 514.0 96.0C515.3 94.8 517.2 95.0 517.0 97.0C516.8 99.0 513.6 104.2 513.0 108.0C512.4 111.8 513.8 117.2 513.5 120.0C513.2 122.8 512.0 125.3 511.0 125.0C510.0 124.7 507.8 121.5 507.5 118.0Z"/>
<path d="M553.0 89.5C554.4 89.3 557.8 90.4 560.0 91.5C562.2 92.6 565.4 95.0 566.0 96.0C566.6 97.0 565.0 97.8 563.5 97.5C562.0 97.2 559.0 95.1 557.0 94.3C555.0 93.5 552.2 93.3 551.5 92.5C550.8 91.7 551.6 89.7 553.0 89.5Z"/>
<path d="M536.5 130.5C537.1 129.7 539.8 129.7 540.4 130.5C541.0 131.3 541.0 134.5 540.4 135.3C539.8 136.1 537.6 136.1 537.0 135.3C536.4 134.5 535.9 131.3 536.5 130.5Z"/>
<path d="M558.0 131.0C558.4 130.2 560.5 130.2 561.0 131.0C561.5 131.8 561.4 135.3 561.0 136.1C560.6 136.9 559.0 136.8 558.5 136.0C558.0 135.2 557.6 131.8 558.0 131.0Z"/>
<path d="M499.0 170.5C500.2 169.3 507.3 168.9 512.0 168.8C516.7 168.7 522.2 169.1 527.0 170.0C531.8 170.9 537.2 171.8 541.0 174.0C544.8 176.2 548.7 178.7 550.0 183.0C551.3 187.3 549.3 194.5 549.0 200.0C548.7 205.5 547.8 209.9 548.0 216.0C548.2 222.1 556.0 233.0 550.0 236.5C544.0 240.0 518.3 240.9 512.0 237.0C505.7 233.1 512.3 221.2 512.0 213.0C511.7 204.8 511.2 194.2 510.0 188.0C508.8 181.8 506.8 178.9 505.0 176.0C503.2 173.1 497.8 171.7 499.0 170.5Z"/>
<path d="M541.6 164.2C543.0 163.6 553.2 164.4 558.6 165.6C564.0 166.8 570.6 168.7 574.1 171.3C577.6 173.9 578.8 176.0 579.7 181.2C580.6 186.4 580.4 196.1 579.7 202.4C579.0 208.8 576.9 213.7 575.5 219.3C574.1 225.0 573.9 233.4 571.3 236.3C568.7 239.2 562.4 237.6 560.0 237.0C557.6 236.4 557.0 236.5 557.0 233.0C557.0 229.5 559.3 221.0 560.0 216.0C560.7 211.0 561.0 208.3 561.0 203.0C561.0 197.7 561.8 189.7 560.0 184.0C558.2 178.3 553.1 172.3 550.0 169.0C546.9 165.7 540.2 164.8 541.6 164.2Z"/>
<path d="M578.4 183.0C580.1 181.7 591.8 180.0 592.4 180.9C593.0 181.8 584.2 188.2 581.9 188.5C579.6 188.8 576.6 184.3 578.4 183.0Z"/>
<path d="M512.4 259.6C516.5 257.9 524.3 257.2 532.5 256.5C540.7 255.8 556.2 254.4 561.8 255.5C567.4 256.6 564.3 258.9 566.0 263.3C567.7 267.7 570.2 275.0 572.0 281.6C573.8 288.2 575.7 295.9 577.0 303.0C578.3 310.1 579.2 317.0 580.0 324.0C580.8 331.0 585.0 342.8 582.0 345.0C579.0 347.2 569.3 338.9 562.1 337.5C554.9 336.1 546.4 336.3 538.6 336.3C530.8 336.3 522.7 336.2 515.2 337.5C507.7 338.8 496.4 346.7 493.5 343.8C490.6 340.9 496.5 328.6 498.0 320.0C499.5 311.4 500.6 300.8 502.3 292.0C504.0 283.2 506.3 272.4 508.0 267.0C509.7 261.6 508.3 261.4 512.4 259.6Z"/>
<path d="M478.0 487.0C474.4 488.3 475.2 493.7 474.5 497.0C473.8 500.3 473.1 503.7 474.0 507.0C474.9 510.3 477.7 514.0 480.0 517.0C482.3 520.0 485.2 523.1 488.0 524.9C490.8 526.7 494.1 527.5 496.9 527.8C499.7 528.1 502.9 527.6 504.9 526.8C506.9 526.0 508.4 525.2 508.9 522.9C509.4 520.6 509.1 515.9 507.9 512.9C506.7 509.9 503.4 508.2 501.9 504.9C500.4 501.6 499.9 495.5 498.9 492.9C497.9 490.2 499.4 490.0 495.9 489.0C492.4 488.0 481.6 485.7 478.0 487.0Z"/>
<path d="M534.8 481.0C532.1 482.2 533.1 486.0 532.8 490.0C532.5 494.0 532.6 499.9 532.8 504.9C533.0 509.9 533.1 516.4 533.8 519.9C534.5 523.4 534.1 524.6 536.8 525.8C539.4 526.9 546.2 527.4 549.7 526.8C553.2 526.1 556.3 523.9 557.7 521.9C559.1 519.9 558.9 517.7 558.2 514.9C557.5 512.1 555.1 508.2 553.7 504.9C552.3 501.6 550.5 498.5 549.7 494.9C548.9 491.2 551.2 485.3 548.7 483.0C546.2 480.7 537.4 479.8 534.8 481.0Z"/>
</g>
<g fill="#fff">
<path d="M524.5 184.5C524.8 184.2 528.6 184.2 529.0 184.5C529.4 184.8 527.8 186.5 527.0 186.5C526.2 186.5 524.2 184.8 524.5 184.5Z"/>
<path d="M484.9 492.0C486.4 491.0 492.6 492.7 494.9 494.0C497.2 495.3 497.7 497.7 498.9 500.0C500.1 502.3 500.7 505.4 501.9 507.9C503.1 510.4 505.4 513.1 505.9 514.9C506.4 516.7 506.2 517.7 504.9 518.9C503.6 520.1 500.2 521.9 497.9 521.9C495.6 521.9 493.1 520.4 490.9 518.9C488.7 517.4 486.9 515.2 484.9 512.9C482.9 510.6 479.3 506.6 479.0 504.9C478.7 503.2 481.9 503.7 483.0 502.9C484.1 502.1 485.6 501.7 485.9 499.9C486.2 498.1 483.4 493.0 484.9 492.0Z"/>
<path d="M538.8 492.0C540.8 490.4 546.6 488.7 548.7 490.0C550.9 491.3 551.0 496.9 551.7 499.9C552.4 502.9 552.9 505.4 552.7 507.9C552.5 510.4 552.4 513.4 550.7 514.9C549.1 516.4 545.1 516.2 542.8 516.9C540.5 517.6 537.6 520.1 536.8 518.9C536.0 517.7 537.8 513.1 537.8 509.9C537.8 506.7 536.6 502.9 536.8 499.9C537.0 496.9 536.8 493.6 538.8 492.0Z"/>
</g>
<g fill="none" stroke="#515d6b" stroke-linecap="round" stroke-linejoin="round">
<path d="M509.0 114.7C509.3 112.9 509.1 107.6 510.6 104.0C512.1 100.4 515.2 96.2 518.2 93.3C521.2 90.4 525.3 88.1 528.9 86.4C532.5 84.7 536.8 83.4 539.6 83.3C542.4 83.2 543.9 84.2 545.7 85.6C547.5 87.0 549.5 90.8 550.3 91.8" stroke-width="2.16"/>
<path d="M516.7 105.5C517.7 103.7 520.0 97.6 522.8 94.8C525.6 92.0 530.5 90.0 533.5 88.7C536.5 87.4 539.8 87.5 541.1 87.2" stroke-width="1.22"/>
<path d="M515.1 123.8C516.9 123.8 522.2 124.3 525.8 123.8C529.4 123.3 532.9 122.3 536.5 120.8C540.1 119.3 544.7 116.4 547.2 114.7C549.8 113.0 551.0 111.5 551.8 110.8" stroke-width="1.62"/>
<path d="M556.4 91.0C557.9 91.9 562.8 93.6 565.6 96.3C568.4 99.0 570.9 102.9 573.2 107.0C575.5 111.1 578.0 117.0 579.3 120.8C580.6 124.6 581.3 126.4 580.8 130.0C580.3 133.6 577.0 140.2 576.3 142.2" stroke-width="2.70"/>
<path d="M550.3 91.8C550.8 93.3 553.0 97.4 553.3 100.9C553.5 104.5 553.1 108.8 551.8 113.1C550.5 117.4 546.7 124.6 545.7 126.9" stroke-width="1.76"/>
<path d="M551.8 96.3C553.1 98.3 556.8 104.8 559.4 108.6C562.0 112.4 565.0 116.0 567.1 119.3C569.2 122.6 570.7 125.6 571.7 128.4C572.7 131.2 573.0 134.8 573.2 136.1" stroke-width="1.49"/>
<path d="M565.6 116.2C566.4 118.2 569.6 124.1 570.1 128.4C570.6 132.7 569.6 138.4 568.6 142.2C567.6 146.0 565.5 148.8 564.0 151.3C562.5 153.8 560.2 156.4 559.4 157.4" stroke-width="2.16"/>
<path d="M516.7 123.8C517.2 125.8 518.4 132.5 519.7 136.1C521.0 139.7 522.3 142.4 524.3 145.2C526.3 148.0 529.1 151.1 531.9 152.9C534.7 154.7 538.5 155.3 541.1 155.9C543.7 156.5 545.2 156.9 547.2 156.7C549.2 156.4 551.0 155.6 553.3 154.4C555.6 153.2 559.7 150.6 561.0 149.8" stroke-width="1.76"/>
<path d="M510.6 123.8C510.6 125.8 509.9 132.0 510.6 136.1C511.4 140.2 513.6 144.5 515.1 148.3C516.6 152.1 518.9 157.2 519.7 159.0" stroke-width="1.49"/>
<path d="M521.3 128.4C521.5 130.7 522.0 138.4 522.8 142.2C523.5 146.0 525.3 149.8 525.8 151.3" stroke-width="1.08"/>
<path d="M509.0 134.5C507.5 135.0 502.9 136.1 499.9 137.6C496.8 139.1 493.0 141.1 490.7 143.7C488.4 146.2 486.7 150.6 486.1 152.9C485.5 155.2 486.8 156.7 486.9 157.4" stroke-width="2.03"/>
<path d="M507.5 139.1C506.0 140.1 500.6 142.6 498.3 145.2C496.0 147.8 494.6 152.9 493.8 154.4" stroke-width="1.22"/>
<path d="M530.4 128.4C531.3 128.4 534.0 128.3 536.0 128.4C538.0 128.5 541.5 129.1 542.6 129.2" stroke-width="1.22"/>
<path d="M553.3 129.2C554.2 129.0 557.0 128.2 559.0 128.0C561.0 127.8 564.5 127.8 565.6 127.7" stroke-width="1.22"/>
<path d="M554.1 138.6C554.1 138.8 554.1 139.8 554.1 140.0" stroke-width="1.22"/>
<path d="M541.1 147.5C541.9 147.6 544.5 147.8 546.0 147.8C547.5 147.8 549.6 147.6 550.3 147.5" stroke-width="1.08"/>
<path d="M523.5 112.5C524.2 113.2 527.2 116.2 528.0 117.0" stroke-width="1.22"/>
<path d="M528.0 112.5C527.2 113.2 524.2 116.2 523.5 117.0" stroke-width="1.22"/>
<path d="M527.0 111.0C527.0 111.0 527.2 111.2 527.3 111.3" stroke-width="1.76"/>
<path d="M522.5 114.0C522.5 114.0 522.7 114.2 522.7 114.3" stroke-width="1.62"/>
<path d="M525.0 118.5C525.0 118.5 525.2 118.8 525.3 118.8" stroke-width="1.62"/>
<path d="M529.0 116.5C529.0 116.5 529.2 116.8 529.2 116.8" stroke-width="1.49"/>
<path d="M528.9 155.9C529.1 157.2 530.1 162.3 530.4 163.6" stroke-width="1.22"/>
<path d="M538.1 155.9C538.6 157.2 540.6 162.3 541.1 163.6" stroke-width="1.22"/>
<path d="M499.9 154.4C500.4 155.9 502.4 162.1 502.9 163.6" stroke-width="1.08"/>
<path d="M561.0 95.0C562.8 97.8 569.2 106.2 572.0 112.0C574.8 117.8 577.5 124.8 578.0 130.0C578.5 135.2 575.5 140.8 575.0 143.0" stroke-width="1.08"/>
<path d="M514.0 110.0C515.0 108.0 517.3 101.3 520.0 98.0C522.7 94.7 528.3 91.3 530.0 90.0" stroke-width="0.94"/>
<path d="M505.0 160.0C506.2 161.0 510.8 165.0 512.0 166.0" stroke-width="1.22"/>
<path d="M489.0 160.0C490.3 160.5 495.7 162.5 497.0 163.0" stroke-width="1.08"/>
<path d="M512.1 215.8C514.1 215.7 520.2 215.0 524.0 215.0C527.8 215.0 533.0 215.7 534.8 215.8" stroke-width="0.80" stroke="#e9ecef"/>
<path d="M477.2 167.0C481.0 166.7 491.8 165.6 499.9 165.2C508.0 164.8 517.4 164.4 526.1 164.4C534.8 164.4 542.7 164.8 552.3 165.2C561.9 165.6 578.5 166.7 583.7 167.0" stroke-width="2.97"/>
<path d="M526.0 168.0C527.5 170.0 532.0 175.3 535.0 180.0C538.0 184.7 542.5 193.3 544.0 196.0" stroke-width="0.90" stroke="#f2f4f6"/>
<path d="M531.0 166.0C532.7 167.7 538.2 172.0 541.0 176.0C543.8 180.0 546.8 187.7 548.0 190.0" stroke-width="0.70" stroke="#e6e9ec"/>
<path d="M510.0 172.0C509.8 175.8 508.7 187.0 508.5 195.0C508.3 203.0 509.2 212.5 509.0 220.0C508.8 227.5 507.8 235.3 507.0 240.0C506.2 244.7 504.5 246.7 504.0 248.0" stroke-width="2.70"/>
<path d="M476.5 255.4C477.2 255.5 480.2 255.7 481.0 255.8" stroke-width="1.08"/>
<path d="M486.0 256.5C487.5 256.6 493.5 256.9 495.0 257.0" stroke-width="1.08"/>
<path d="M552.0 172.0C551.7 175.0 550.2 185.3 550.0 190.0C549.8 194.7 550.8 198.3 551.0 200.0" stroke-width="0.60" stroke="#9aa3ad"/>
<path d="M566.0 180.0C566.8 183.3 570.3 192.5 571.0 200.0C571.7 207.5 570.2 220.8 570.0 225.0" stroke-width="0.60" stroke="#8a949f"/>
<path d="M548.0 172.0C549.3 174.7 553.5 182.3 556.0 188.0C558.5 193.7 562.3 199.3 563.0 206.0C563.7 212.7 560.5 224.3 560.0 228.0" stroke-width="1.08"/>
<path d="M577.0 176.0C578.0 177.3 582.2 180.0 583.0 184.0C583.8 188.0 582.2 197.3 582.0 200.0" stroke-width="1.22"/>
<path d="M496.4 170.5C494.6 171.1 488.4 171.7 485.9 174.0C483.4 176.3 482.5 180.6 481.6 184.4C480.7 188.2 480.9 194.6 480.7 196.6" stroke-width="1.76"/>
<path d="M475.5 199.3C478.1 198.9 485.7 197.1 491.2 196.6C496.7 196.1 505.7 196.6 508.6 196.6" stroke-width="2.97"/>
<path d="M475.5 201.9C478.1 202.5 485.4 205.2 491.2 205.4C497.0 205.6 507.2 203.2 510.4 202.8" stroke-width="2.43"/>
<path d="M482.5 205.4C482.4 209.5 482.2 219.9 481.6 229.8C481.0 239.7 479.9 256.4 479.0 264.7C478.1 273.0 476.4 277.0 475.9 279.5" stroke-width="1.76"/>
<path d="M505.1 207.1C504.7 211.5 503.1 226.6 502.5 233.3C501.9 240.0 501.8 245.0 501.6 247.3" stroke-width="1.76"/>
<path d="M571.5 175.7C572.6 176.0 576.9 176.3 578.4 177.5C579.9 178.7 579.9 181.8 580.2 182.7" stroke-width="1.62"/>
<path d="M580.2 187.9C580.2 192.0 580.8 204.0 580.2 212.4C579.6 220.8 577.6 232.1 576.7 238.5C575.8 244.9 575.2 248.8 574.9 250.8" stroke-width="1.89"/>
<path d="M513.9 236.8C520.0 236.9 541.2 237.5 550.5 237.5C559.8 237.5 566.5 236.9 569.7 236.8" stroke-width="2.16"/>
<path d="M517.4 238.5C517.2 240.0 516.6 245.8 516.5 247.3" stroke-width="1.22"/>
<path d="M512.1 249.9C515.9 250.3 525.8 251.8 534.8 252.5C543.8 253.2 561.0 253.9 566.2 254.2" stroke-width="2.97"/>
<path d="M503.4 321.1C505.4 322.3 510.3 326.2 515.2 328.1C520.1 330.1 527.9 331.8 532.8 332.8C537.7 333.8 538.6 334.2 544.5 334.0C550.4 333.8 564.0 332.1 567.9 331.7" stroke-width="1.80" stroke="#eef0f2"/>
<path d="M545.0 335.5C548.3 335.7 559.5 335.4 565.0 336.5C570.5 337.6 575.8 341.1 578.0 342.0" stroke-width="0.70" stroke="#c9cfd5"/>
<path d="M510.6 267.0C511.5 266.1 512.8 262.9 516.1 261.5C519.5 260.1 524.3 259.3 530.7 258.9C537.1 258.5 550.5 258.9 554.5 258.9" stroke-width="0.90" stroke="#d5dade"/>
<path d="M561.8 267.0C562.7 268.8 565.8 272.4 567.3 277.9C568.8 283.4 570.0 292.5 570.9 299.8C571.8 307.1 572.5 318.1 572.8 321.8" stroke-width="1.00" stroke="#c5ccd3"/>
<path d="M543.5 282.0C542.9 288.3 540.8 311.0 540.0 320.0C539.2 329.0 539.2 333.3 539.0 336.0" stroke-width="0.60" stroke="#3e4956"/>
<path d="M503.0 267.0C502.2 272.5 499.6 287.2 498.0 300.0C496.4 312.8 494.2 336.7 493.5 344.0" stroke-width="1.08"/>
<path d="M492.9 343.4C496.6 342.5 507.6 339.1 515.2 338.0C522.8 336.9 530.8 337.0 538.6 337.0C546.4 337.0 554.9 336.6 562.1 338.0C569.3 339.4 578.7 344.4 582.0 345.7" stroke-width="1.89"/>
<path d="M582.0 345.0C582.2 345.8 582.8 349.2 583.0 350.0" stroke-width="1.62"/>
<path d="M493.0 344.0C492.7 344.5 491.3 346.5 491.0 347.0" stroke-width="1.62"/>
<path d="M477.9 240.0C477.6 243.3 477.2 251.6 475.9 259.9C474.6 268.2 471.9 281.2 469.9 289.8C467.9 298.4 465.2 307.1 463.9 311.7C462.6 316.3 457.0 317.4 462.0 317.7C467.0 318.0 488.5 314.4 493.8 313.7" stroke-width="1.89"/>
<path d="M466.0 300.0C465.7 302.2 464.3 310.8 464.0 313.0" stroke-width="1.22"/>
<path d="M494.8 255.9C495.3 263.2 497.5 289.8 497.8 299.8C498.1 309.8 497.0 313.1 496.8 315.7" stroke-width="1.76"/>
<path d="M477.9 321.7C478.2 323.7 477.9 331.0 479.9 333.6C481.9 336.2 488.1 336.9 489.8 337.6" stroke-width="1.35"/>
<path d="M567.5 252.0C569.2 254.7 573.9 261.3 577.5 267.9C581.1 274.5 586.8 286.5 589.4 291.8C592.0 297.1 590.7 297.8 593.4 299.8C596.1 301.8 606.1 302.7 605.4 303.7C604.7 304.7 592.1 305.4 589.4 305.7" stroke-width="1.76"/>
<path d="M585.5 305.7C586.8 306.7 592.8 309.0 593.4 311.7C594.0 314.4 590.1 320.0 589.4 321.7" stroke-width="1.89"/>
<path d="M510.0 257.7C515.0 257.6 530.6 257.0 540.0 257.0C549.4 257.0 561.8 257.6 566.2 257.7" stroke-width="2.43"/>
<path d="M502.8 342.0C502.3 346.6 500.5 359.2 499.8 369.8C499.1 380.4 499.8 395.7 498.8 405.7C497.8 415.7 495.3 422.2 493.8 429.6C492.3 437.0 492.0 440.5 489.8 449.9C487.6 459.2 482.4 479.7 480.9 485.7" stroke-width="1.49"/>
<path d="M539.6 342.0C538.0 348.3 532.7 370.2 529.7 379.8C526.7 389.4 524.4 392.1 521.7 399.7C519.0 407.3 516.0 417.2 513.7 425.6C511.4 434.0 510.5 439.2 507.8 449.9C505.1 460.6 499.5 483.1 497.8 489.7" stroke-width="1.49"/>
<path d="M541.6 342.0C540.6 347.3 536.0 365.2 535.7 373.8C535.4 382.4 539.3 386.1 539.6 393.7C539.9 401.3 538.2 410.2 537.6 419.6C537.0 429.0 536.0 439.5 535.7 449.9C535.4 460.3 535.7 476.5 535.7 481.8" stroke-width="1.35"/>
<path d="M571.5 342.0C570.8 346.6 569.1 360.5 567.5 369.8C565.9 379.1 563.2 389.4 561.6 397.7C560.0 406.0 558.9 410.9 557.6 419.6C556.3 428.3 555.1 439.5 553.6 449.9C552.1 460.3 549.4 476.5 548.6 481.8" stroke-width="1.49"/>
<path d="M509.8 399.7C509.5 402.4 508.1 413.0 507.8 415.7" stroke-width="1.08"/>
<path d="M547.6 385.8C547.3 389.1 545.9 402.4 545.6 405.7" stroke-width="1.08"/>
<path d="M567.5 350.0C567.2 352.6 565.8 363.2 565.5 365.9" stroke-width="2.70"/>
<path d="M486.0 494.0C487.3 493.8 492.2 492.7 494.0 493.0C495.8 493.3 496.5 495.5 497.0 496.0" stroke-width="1.49"/>
<path d="M488.0 503.0C489.0 502.7 492.5 501.0 494.0 501.0C495.5 501.0 496.5 502.7 497.0 503.0" stroke-width="1.22"/>
<path d="M538.0 493.0C539.7 492.7 546.3 491.3 548.0 491.0" stroke-width="1.76"/>
<path d="M540.0 502.0C541.5 501.5 547.5 499.5 549.0 499.0" stroke-width="1.22"/>
<path d="M479.0 490.0C479.2 489.3 479.8 486.7 480.0 486.0" stroke-width="1.62"/>
</g></svg>
<!-- right docker -->
<div class="btn" style="left:863px;top:46px;width:17px;height:17px"></div>
<svg style="left:0;top:0" width="1" height="1"><path d="M867 51H876M867 54H876M867 57H876" stroke="#333" stroke-width="1.3"/><path d="M875.5 59H878.5L877 60.5Z" fill="#333"/></svg>
<div class="a" style="left:883px;top:46px;width:120px;height:17px;border:1px solid #cdcdcd;border-radius:2px;background:#eeeeee"></div>
<div class="btn" style="left:1006px;top:46px;width:17px;height:17px"></div>
<svg style="left:0;top:0" width="1" height="1"><rect x="1010.6" y="51.7" width="8.4" height="7.8" fill="none" stroke="#555" stroke-width="0.9"/><rect x="1010.2" y="51.2" width="9.2" height="1.9" fill="#222"/><path d="M1018.2 59.8H1020.8L1019.5 61.2Z" fill="#444"/></svg>
<!-- color wheel -->
<div class="a" style="left:907.8px;top:67.9px;width:70px;height:70px;border-radius:50%;background:conic-gradient(from 90deg,#ff0000,#ff00ff,#0000ff,#00ffff,#00ff00,#ffff00,#ff0000);-webkit-mask:radial-gradient(circle,transparent 25px,#000 25.6px,#000 34.6px,transparent 35.2px);mask:radial-gradient(circle,transparent 25px,#000 25.6px,#000 34.6px,transparent 35.2px)"></div>
<svg style="left:0;top:0" width="1" height="1">
<defs>
<linearGradient id="triA" gradientUnits="userSpaceOnUse" x1="921.8" y1="116.4" x2="964.3" y2="113.7"><stop offset="0" stop-color="#1f6ae0"/><stop offset="0.5" stop-color="#6f9ad8"/><stop offset="1" stop-color="#e2e2e2"/></linearGradient>
<linearGradient id="triB" gradientUnits="userSpaceOnUse" x1="941" y1="78" x2="945" y2="115"><stop offset="0" stop-color="#000" stop-opacity="1"/><stop offset="0.35" stop-color="#000" stop-opacity="0.6"/><stop offset="1" stop-color="#000" stop-opacity="0"/></linearGradient>
</defs>

<path d="M941 77.7L921.8 116.4L964.3 113.7Z" fill="url(#triA)"/>
<path d="M941 77.7L921.8 116.4L964.3 113.7Z" fill="url(#triB)"/>
<circle cx="947.3" cy="93.4" r="3.9" fill="none" stroke="#fff" stroke-width="2"/>
<path d="M912.5 122.9L922.5 116.3" stroke="#000" stroke-width="2.2"/>
<path d="M937 143.5H949" stroke="#c4c4c4" stroke-width="1" stroke-dasharray="1 1"/>
</svg>
<!-- blend row -->
<div class="btn" style="left:863px;top:147px;width:17px;height:17px"></div>
<svg style="left:0;top:0" width="1" height="1"><path d="M869 155V153C869 150.8 873 150.8 873 153V155" fill="none" stroke="#222" stroke-width="1.1"/><rect x="868" y="155" width="6" height="4.6" fill="#222"/><path d="M875.5 160.5H878L876.7 162Z" fill="#333"/></svg>
<div class="btn" style="left:883px;top:147px;width:120px;height:17px"></div>
<span class="t n" style="left:886px;top:152px;font-size:9px;color:#111">正常</span>
<svg style="left:0;top:0" width="1" height="1"><path d="M991.5 154H997L994.2 157Z" fill="#333"/></svg>
<div class="btn" style="left:1006px;top:147px;width:17px;height:17px"></div>
<svg style="left:0;top:0" width="1" height="1"><rect x="1010.6" y="152.7" width="8.4" height="7.8" fill="none" stroke="#555" stroke-width="0.9"/><rect x="1010.2" y="152.2" width="9.2" height="1.9" fill="#222"/><path d="M1018.2 160.8H1020.8L1019.5 162.2Z" fill="#444"/></svg>
<!-- opacity row -->
<div class="btn" style="left:863px;top:167px;width:17px;height:16px"></div>
<svg style="left:0;top:0" width="1" height="1"><path d="M867 179.5L867.8 177L873 171.8L874.5 173.3L869.3 178.5Z" fill="none" stroke="#333" stroke-width="0.9"/><path d="M868 179.5C871 179.5 874 177 876 178.5" fill="none" stroke="#333" stroke-width="0.8"/></svg>
<div class="a" style="left:880px;top:167px;width:143px;height:16px;border:1px solid #cccccc;border-radius:2px;background:#fff"></div>
<div class="a" style="left:881px;top:168px;width:132px;height:14px;background:#2f88c9"></div>
<span class="t n" style="left:916px;top:171px;font-size:9px;color:#fff">不透明度<span style="letter-spacing:-3px">：</span> <span style="font-size:8.5px;letter-spacing:-0.4px">100%</span></span>
<svg style="left:0;top:0" width="1" height="1"><path d="M1015 174H1020L1017.5 171.3Z" fill="#999"/><path d="M1015 177H1020L1017.5 179.8Z" fill="#444"/></svg>
<!-- layers list -->
<div class="a" style="left:861px;top:185px;width:163px;height:192px;background:#fff;border:1px solid #d0d0d0;border-top:none"></div>
<div class="a" style="left:862px;top:185px;width:162px;height:20px;background:#2f88c9"></div>
<svg style="left:0;top:0" width="1" height="1">
<g fill="#1a1a1a">
<path d="M881 191H890.5L889.5 193H880Z"/><path d="M881 194.2H890.5L889.5 196.2H880Z"/><path d="M881 197.4H890.5L889.5 199.4H880Z"/>
<path d="M881 210.5H890.5L889.5 212.5H880Z"/><path d="M881 213.7H890.5L889.5 215.7H880Z"/><path d="M881 216.9H890.5L889.5 218.9H880Z"/>
<path d="M881 230H890.5L889.5 232H880Z"/><path d="M881 233.2H890.5L889.5 235.2H880Z"/><path d="M881 236.4H890.5L889.5 238.4H880Z"/>
<path d="M881 249.5H890.5L889.5 251.5H880Z"/><path d="M881 252.7H890.5L889.5 254.7H880Z"/><path d="M881 255.9H890.5L889.5 257.9H880Z"/>
</g>
<rect x="1009.5" y="190.5" width="9.5" height="9.5" fill="#7a9cba" stroke="#b9cfe2" stroke-width="1"/>
<rect x="1009.5" y="209.5" width="9.5" height="9.5" fill="#fff" stroke="#d6d6d6" stroke-width="1"/>
<rect x="1009.5" y="229" width="9.5" height="9.5" fill="#fff" stroke="#d6d6d6" stroke-width="1"/>
<rect x="1009.5" y="248.5" width="9.5" height="9.5" fill="#fff" stroke="#d6d6d6" stroke-width="1"/>
<!-- cursor -->
<path d="M894.5 354.5V366L897.3 363.5L899.2 367.8L900.8 367L899 363H902.7Z" fill="#fff" stroke="#333" stroke-width="0.9" stroke-linejoin="round"/>
</svg>
<span class="t n" style="left:895px;top:191px;font-size:9px;color:#fff">图层 4</span>
<span class="t n" style="left:895px;top:210px;font-size:9px;color:#222">图层 2</span>
<span class="t n" style="left:895px;top:229.5px;font-size:9px;color:#222">图层 1</span>
<span class="t n" style="left:895px;top:249px;font-size:9px;color:#222">图层 5</span>
<!-- layer buttons -->
<div class="btn" style="left:863px;top:379px;width:110px;height:17px"></div>
<div class="btn" style="left:1003px;top:379px;width:20px;height:17px"></div>
<svg style="left:0;top:0" width="1" height="1">
<path d="M874 387.5H881.5M877.7 383.7V391.3" stroke="#333" stroke-width="1"/>
<path d="M892.5 383.5V391.5M912.8 383.5V391.5M932.9 383.5V391.5M952.6 383.5V391.5" stroke="#c0c0c0" stroke-width="1"/>
<path d="M898.5 384H902L903 385.3H907.5V391.5H898.5Z" fill="none" stroke="#333" stroke-width="1.1"/><path d="M898.5 385.3H907.5" stroke="#333" stroke-width="1.5"/>
<path d="M919.5 383.5H923L924 384.5V389.5H919.5Z" fill="#fff" stroke="#333" stroke-width="0.9"/><path d="M922 385.5H925L926.8 387.3V391.5H922Z" fill="#fff" stroke="#333" stroke-width="0.9"/>
<path d="M938.5 384L942.7 387.5L947 384M938.5 387.3L942.7 390.8L947 387.3" fill="none" stroke="#555" stroke-width="0.9"/>
<path d="M958.5 385.3H966.5M958.5 390H966.5" stroke="#444" stroke-width="0.9"/><circle cx="963" cy="385.3" r="1.3" fill="#222"/><circle cx="960" cy="390" r="1.3" fill="#fff" stroke="#333" stroke-width="0.8"/>
<path d="M1009.5 384.5H1017.5M1012 384.5V383.3H1015V384.5M1010.5 385V391.5H1016.5V385" fill="none" stroke="#444" stroke-width="0.9"/>
<path d="M937 398.5H949" stroke="#c4c4c4" stroke-width="1" stroke-dasharray="1 1"/>
</svg>
<!-- palette docker -->
<div class="a" style="left:1003px;top:400px;width:21px;height:33px;border:1px solid #d0d0d0;border-right:none;border-radius:2px 0 0 2px;background:#f7f7f7"></div>
<div class="a" style="left:1004px;top:433px;width:20px;height:31px;border:1px solid #d0d0d0;border-right:none;border-radius:2px 0 0 2px;background:#e3e3e3"></div>
<svg style="left:0;top:0" width="1" height="1">
<g fill="#333"><rect x="1015" y="411" width="2.2" height="2.2"/><rect x="1018" y="411" width="2.2" height="2.2"/><rect x="1015" y="414.3" width="2.2" height="2.2"/><rect x="1018" y="414.3" width="2.2" height="2.2"/><rect x="1015" y="417.6" width="2.2" height="2.2"/><rect x="1018" y="417.6" width="2.2" height="2.2"/></g>
<g fill="#999"><rect x="1012" y="411" width="2.2" height="2.2"/><rect x="1012" y="414.3" width="2.2" height="2.2"/><rect x="1009.5" y="414.3" width="1.6" height="2.2" fill="#bbb"/><rect x="1012" y="417.6" width="2.2" height="2.2"/></g>
<path d="M1010.5 442L1011.5 450M1013.5 442V450M1016.5 442L1015.5 450M1018.5 442V447" fill="none" stroke="#666" stroke-width="1.3"/><path d="M1011 448L1012 451M1016 448L1015 451" stroke="#222" stroke-width="1.6"/>
</svg>
<div class="btn" style="left:863px;top:403px;width:17px;height:17px"></div>
<svg style="left:0;top:0" width="1" height="1"><path d="M867 408H876M867 411H876M867 414H876" stroke="#333" stroke-width="1.3"/><path d="M875.5 416H878.5L877 417.5Z" fill="#333"/></svg>
<div class="a" style="left:883px;top:403px;width:100px;height:17px;border:1px solid #cdcdcd;border-radius:2px;background:#eeeeee"></div>
<div class="btn" style="left:986px;top:403px;width:17px;height:17px"></div>
<svg style="left:0;top:0" width="1" height="1"><rect x="990.1" y="408.7" width="8.4" height="7.8" fill="none" stroke="#555" stroke-width="0.9"/><rect x="989.7" y="408.2" width="9.2" height="1.9" fill="#222"/><path d="M997.7 416.8H1000.3L999.0 418.2Z" fill="#444"/></svg>
<div class="btn" style="left:863px;top:422px;width:34px;height:16px"></div>
<svg style="left:0;top:0" width="1" height="1">
<rect x="867.5" y="425.5" width="7" height="8" fill="#ccc" stroke="#555" stroke-width="0.8"/><path d="M869.8 425.5V433.5M872.2 425.5V433.5M867.5 428.2H874.5M867.5 430.8H874.5" stroke="#555" stroke-width="0.6"/><rect x="872" y="425" width="3.5" height="6" fill="#4aa3e0"/>
<path d="M880 425V435" stroke="#c0c0c0" stroke-width="1"/>
<rect x="884.5" y="425.5" width="7" height="8" fill="#f0b0b0" stroke="#555" stroke-width="0.8"/><path d="M886.8 425.5V433.5M889.2 425.5V433.5M884.5 428.2H891.5M884.5 430.8H891.5" stroke="#c03030" stroke-width="0.6"/>
</svg>
<div class="btn" style="left:900px;top:422px;width:101px;height:16px"></div>
<span class="t n" style="left:903px;top:426px;font-family:'Liberation Mono',monospace;font-size:9.5px;font-weight:bold;color:#222;transform:scaleX(0.78);transform-origin:0 0">Tango icons</span>
<svg style="left:0;top:0" width="1" height="1"><path d="M989.5 428.5H995L992.2 431.5Z" fill="#333"/></svg>
<div class="a" style="left:862px;top:440px;width:142px;height:84px;background:#f5f5f5"></div>
<div class="a" style="left:863.6px;top:441.6px;width:22.6px;height:11.8px;background:#fce94f"></div>
<div class="a" style="left:886.5px;top:441.6px;width:22.6px;height:11.8px;background:#edd400"></div>
<div class="a" style="left:909.4px;top:441.6px;width:22.6px;height:11.8px;background:#c4a000"></div>
<div class="a" style="left:932.3px;top:441.6px;width:22.6px;height:11.8px;background:#8ae234"></div>
<div class="a" style="left:955.2px;top:441.6px;width:22.6px;height:11.8px;background:#73d216"></div>
<div class="a" style="left:978.1px;top:441.6px;width:22.6px;height:11.8px;background:#4e9a06"></div>
<div class="a" style="left:863.6px;top:453.7px;width:22.6px;height:11.8px;background:#fcaf3e"></div>
<div class="a" style="left:886.5px;top:453.7px;width:22.6px;height:11.8px;background:#f57900"></div>
<div class="a" style="left:909.4px;top:453.7px;width:22.6px;height:11.8px;background:#ce5c00"></div>
<div class="a" style="left:932.3px;top:453.7px;width:22.6px;height:11.8px;background:#729fcf"></div>
<div class="a" style="left:955.2px;top:453.7px;width:22.6px;height:11.8px;background:#3465a4"></div>
<div class="a" style="left:978.1px;top:453.7px;width:22.6px;height:11.8px;background:#204a87"></div>
<div class="a" style="left:863.6px;top:465.8px;width:22.6px;height:11.8px;background:#ad7fa8"></div>
<div class="a" style="left:886.5px;top:465.8px;width:22.6px;height:11.8px;background:#75507b"></div>
<div class="a" style="left:909.4px;top:465.8px;width:22.6px;height:11.8px;background:#5c3566"></div>
<div class="a" style="left:932.3px;top:465.8px;width:22.6px;height:11.8px;background:#e9b96e"></div>
<div class="a" style="left:955.2px;top:465.8px;width:22.6px;height:11.8px;background:#c17d11"></div>
<div class="a" style="left:978.1px;top:465.8px;width:22.6px;height:11.8px;background:#8f5902"></div>
<div class="a" style="left:863.6px;top:477.9px;width:22.6px;height:11.8px;background:#ef2929"></div>
<div class="a" style="left:886.5px;top:477.9px;width:22.6px;height:11.8px;background:#cc0000"></div>
<div class="a" style="left:909.4px;top:477.9px;width:22.6px;height:11.8px;background:#a40000"></div>
<div class="a" style="left:932.3px;top:477.9px;width:22.6px;height:11.8px;background:#ffffff"></div>
<div class="a" style="left:955.2px;top:477.9px;width:22.6px;height:11.8px;background:#eeeeec"></div>
<div class="a" style="left:978.1px;top:477.9px;width:22.6px;height:11.8px;background:#d3d7cf"></div>
<div class="a" style="left:863.6px;top:490.0px;width:22.6px;height:11.8px;background:#babdb6"></div>
<div class="a" style="left:886.5px;top:490.0px;width:22.6px;height:11.8px;background:#888a85"></div>
<div class="a" style="left:909.4px;top:490.0px;width:22.6px;height:11.8px;background:#555753"></div>
<div class="a" style="left:932.3px;top:490.0px;width:22.6px;height:11.8px;background:#2e3436"></div>
<div class="a" style="left:955.2px;top:490.0px;width:22.6px;height:11.8px;background:#000000"></div>
<div class="a" style="left:978.1px;top:490.0px;width:22.6px;height:11.8px;background:#fff;border:1px solid #111"></div>
<svg style="left:0;top:0" width="1" height="1"><path d="M986.1 496.1H993.1M989.6 492.6V499.6" stroke="#222" stroke-width="1"/></svg>
<svg style="left:0;top:0" width="1" height="1"><path d="M937 525.5H949" stroke="#c4c4c4" stroke-width="1" stroke-dasharray="1 1"/></svg>
<!-- zoom row -->
<div class="btn" style="left:863px;top:530px;width:17px;height:16px"></div>
<svg style="left:0;top:0" width="1" height="1"><rect x="868" y="534" width="7.5" height="7.5" fill="none" stroke="#555" stroke-width="0.9"/><g fill="#333"><circle cx="868" cy="534" r="1.1"/><circle cx="875.5" cy="534" r="1.1"/><circle cx="868" cy="541.5" r="1.1"/><circle cx="875.5" cy="541.5" r="1.1"/></g></svg>
<div class="a" style="left:880px;top:530px;width:126px;height:16px;border:1px solid #cccccc;border-radius:2px;background:#fff"></div>
<div class="a" style="left:881px;top:531px;width:26px;height:14px;background:#2f88c9"></div>
<span class="t n" style="left:924px;top:534px;font-family:'Liberation Mono',monospace;font-size:9.5px;color:#222;transform:scaleX(0.85);transform-origin:0 0">24.77%</span>
<div class="a" style="left:995px;top:531px;width:1px;height:14px;background:#d6d6d6"></div>
<svg style="left:0;top:0" width="1" height="1"><path d="M998 536.5H1003L1000.5 533.8Z" fill="#444"/><path d="M998 539.5H1003L1000.5 542.3Z" fill="#444"/></svg>
<div class="btn" style="left:1006px;top:530px;width:17px;height:16px"></div>
<svg style="left:0;top:0" width="1" height="1"><rect x="1010.6" y="534.7" width="8.4" height="7.8" fill="none" stroke="#555" stroke-width="0.9"/><rect x="1010.2" y="534.2" width="9.2" height="1.9" fill="#222"/><path d="M1018.2 542.8H1020.8L1019.5 544.2Z" fill="#444"/></svg>
<!-- overview -->
<div class="a" style="left:861px;top:547px;width:163px;height:55px;background:#646464"></div>
<div class="a" style="left:925px;top:548px;width:36px;height:54px;background:#fff"></div>
<svg style="left:0;top:0" width="1" height="1"><g transform="translate(925 548) scale(0.0997) translate(-360 -44)"><g fill="#515d6b" stroke="#515d6b" stroke-width="2" stroke-linejoin="round">
<path d="M507.5 118.0C507.2 114.5 507.9 107.7 509.0 104.0C510.1 100.3 512.7 97.2 514.0 96.0C515.3 94.8 517.2 95.0 517.0 97.0C516.8 99.0 513.6 104.2 513.0 108.0C512.4 111.8 513.8 117.2 513.5 120.0C513.2 122.8 512.0 125.3 511.0 125.0C510.0 124.7 507.8 121.5 507.5 118.0Z"/>
<path d="M553.0 89.5C554.4 89.3 557.8 90.4 560.0 91.5C562.2 92.6 565.4 95.0 566.0 96.0C566.6 97.0 565.0 97.8 563.5 97.5C562.0 97.2 559.0 95.1 557.0 94.3C555.0 93.5 552.2 93.3 551.5 92.5C550.8 91.7 551.6 89.7 553.0 89.5Z"/>
<path d="M536.5 130.5C537.1 129.7 539.8 129.7 540.4 130.5C541.0 131.3 541.0 134.5 540.4 135.3C539.8 136.1 537.6 136.1 537.0 135.3C536.4 134.5 535.9 131.3 536.5 130.5Z"/>
<path d="M558.0 131.0C558.4 130.2 560.5 130.2 561.0 131.0C561.5 131.8 561.4 135.3 561.0 136.1C560.6 136.9 559.0 136.8 558.5 136.0C558.0 135.2 557.6 131.8 558.0 131.0Z"/>
<path d="M499.0 170.5C500.2 169.3 507.3 168.9 512.0 168.8C516.7 168.7 522.2 169.1 527.0 170.0C531.8 170.9 537.2 171.8 541.0 174.0C544.8 176.2 548.7 178.7 550.0 183.0C551.3 187.3 549.3 194.5 549.0 200.0C548.7 205.5 547.8 209.9 548.0 216.0C548.2 222.1 556.0 233.0 550.0 236.5C544.0 240.0 518.3 240.9 512.0 237.0C505.7 233.1 512.3 221.2 512.0 213.0C511.7 204.8 511.2 194.2 510.0 188.0C508.8 181.8 506.8 178.9 505.0 176.0C503.2 173.1 497.8 171.7 499.0 170.5Z"/>
<path d="M541.6 164.2C543.0 163.6 553.2 164.4 558.6 165.6C564.0 166.8 570.6 168.7 574.1 171.3C577.6 173.9 578.8 176.0 579.7 181.2C580.6 186.4 580.4 196.1 579.7 202.4C579.0 208.8 576.9 213.7 575.5 219.3C574.1 225.0 573.9 233.4 571.3 236.3C568.7 239.2 562.4 237.6 560.0 237.0C557.6 236.4 557.0 236.5 557.0 233.0C557.0 229.5 559.3 221.0 560.0 216.0C560.7 211.0 561.0 208.3 561.0 203.0C561.0 197.7 561.8 189.7 560.0 184.0C558.2 178.3 553.1 172.3 550.0 169.0C546.9 165.7 540.2 164.8 541.6 164.2Z"/>
<path d="M578.4 183.0C580.1 181.7 591.8 180.0 592.4 180.9C593.0 181.8 584.2 188.2 581.9 188.5C579.6 188.8 576.6 184.3 578.4 183.0Z"/>
<path d="M512.4 259.6C516.5 257.9 524.3 257.2 532.5 256.5C540.7 255.8 556.2 254.4 561.8 255.5C567.4 256.6 564.3 258.9 566.0 263.3C567.7 267.7 570.2 275.0 572.0 281.6C573.8 288.2 575.7 295.9 577.0 303.0C578.3 310.1 579.2 317.0 580.0 324.0C580.8 331.0 585.0 342.8 582.0 345.0C579.0 347.2 569.3 338.9 562.1 337.5C554.9 336.1 546.4 336.3 538.6 336.3C530.8 336.3 522.7 336.2 515.2 337.5C507.7 338.8 496.4 346.7 493.5 343.8C490.6 340.9 496.5 328.6 498.0 320.0C499.5 311.4 500.6 300.8 502.3 292.0C504.0 283.2 506.3 272.4 508.0 267.0C509.7 261.6 508.3 261.4 512.4 259.6Z"/>
<path d="M478.0 487.0C474.4 488.3 475.2 493.7 474.5 497.0C473.8 500.3 473.1 503.7 474.0 507.0C474.9 510.3 477.7 514.0 480.0 517.0C482.3 520.0 485.2 523.1 488.0 524.9C490.8 526.7 494.1 527.5 496.9 527.8C499.7 528.1 502.9 527.6 504.9 526.8C506.9 526.0 508.4 525.2 508.9 522.9C509.4 520.6 509.1 515.9 507.9 512.9C506.7 509.9 503.4 508.2 501.9 504.9C500.4 501.6 499.9 495.5 498.9 492.9C497.9 490.2 499.4 490.0 495.9 489.0C492.4 488.0 481.6 485.7 478.0 487.0Z"/>
<path d="M534.8 481.0C532.1 482.2 533.1 486.0 532.8 490.0C532.5 494.0 532.6 499.9 532.8 504.9C533.0 509.9 533.1 516.4 533.8 519.9C534.5 523.4 534.1 524.6 536.8 525.8C539.4 526.9 546.2 527.4 549.7 526.8C553.2 526.1 556.3 523.9 557.7 521.9C559.1 519.9 558.9 517.7 558.2 514.9C557.5 512.1 555.1 508.2 553.7 504.9C552.3 501.6 550.5 498.5 549.7 494.9C548.9 491.2 551.2 485.3 548.7 483.0C546.2 480.7 537.4 479.8 534.8 481.0Z"/>
</g>
<g fill="#fff">
<path d="M524.5 184.5C524.8 184.2 528.6 184.2 529.0 184.5C529.4 184.8 527.8 186.5 527.0 186.5C526.2 186.5 524.2 184.8 524.5 184.5Z"/>
<path d="M484.9 492.0C486.4 491.0 492.6 492.7 494.9 494.0C497.2 495.3 497.7 497.7 498.9 500.0C500.1 502.3 500.7 505.4 501.9 507.9C503.1 510.4 505.4 513.1 505.9 514.9C506.4 516.7 506.2 517.7 504.9 518.9C503.6 520.1 500.2 521.9 497.9 521.9C495.6 521.9 493.1 520.4 490.9 518.9C488.7 517.4 486.9 515.2 484.9 512.9C482.9 510.6 479.3 506.6 479.0 504.9C478.7 503.2 481.9 503.7 483.0 502.9C484.1 502.1 485.6 501.7 485.9 499.9C486.2 498.1 483.4 493.0 484.9 492.0Z"/>
<path d="M538.8 492.0C540.8 490.4 546.6 488.7 548.7 490.0C550.9 491.3 551.0 496.9 551.7 499.9C552.4 502.9 552.9 505.4 552.7 507.9C552.5 510.4 552.4 513.4 550.7 514.9C549.1 516.4 545.1 516.2 542.8 516.9C540.5 517.6 537.6 520.1 536.8 518.9C536.0 517.7 537.8 513.1 537.8 509.9C537.8 506.7 536.6 502.9 536.8 499.9C537.0 496.9 536.8 493.6 538.8 492.0Z"/>
</g>
<g fill="none" stroke="#515d6b" stroke-linecap="round" stroke-linejoin="round">
<path d="M509.0 114.7C509.3 112.9 509.1 107.6 510.6 104.0C512.1 100.4 515.2 96.2 518.2 93.3C521.2 90.4 525.3 88.1 528.9 86.4C532.5 84.7 536.8 83.4 539.6 83.3C542.4 83.2 543.9 84.2 545.7 85.6C547.5 87.0 549.5 90.8 550.3 91.8" stroke-width="8.00"/>
<path d="M516.7 105.5C517.7 103.7 520.0 97.6 522.8 94.8C525.6 92.0 530.5 90.0 533.5 88.7C536.5 87.4 539.8 87.5 541.1 87.2" stroke-width="4.50"/>
<path d="M515.1 123.8C516.9 123.8 522.2 124.3 525.8 123.8C529.4 123.3 532.9 122.3 536.5 120.8C540.1 119.3 544.7 116.4 547.2 114.7C549.8 113.0 551.0 111.5 551.8 110.8" stroke-width="6.00"/>
<path d="M556.4 91.0C557.9 91.9 562.8 93.6 565.6 96.3C568.4 99.0 570.9 102.9 573.2 107.0C575.5 111.1 578.0 117.0 579.3 120.8C580.6 124.6 581.3 126.4 580.8 130.0C580.3 133.6 577.0 140.2 576.3 142.2" stroke-width="10.00"/>
<path d="M550.3 91.8C550.8 93.3 553.0 97.4 553.3 100.9C553.5 104.5 553.1 108.8 551.8 113.1C550.5 117.4 546.7 124.6 545.7 126.9" stroke-width="6.50"/>
<path d="M551.8 96.3C553.1 98.3 556.8 104.8 559.4 108.6C562.0 112.4 565.0 116.0 567.1 119.3C569.2 122.6 570.7 125.6 571.7 128.4C572.7 131.2 573.0 134.8 573.2 136.1" stroke-width="5.50"/>
<path d="M565.6 116.2C566.4 118.2 569.6 124.1 570.1 128.4C570.6 132.7 569.6 138.4 568.6 142.2C567.6 146.0 565.5 148.8 564.0 151.3C562.5 153.8 560.2 156.4 559.4 157.4" stroke-width="8.00"/>
<path d="M516.7 123.8C517.2 125.8 518.4 132.5 519.7 136.1C521.0 139.7 522.3 142.4 524.3 145.2C526.3 148.0 529.1 151.1 531.9 152.9C534.7 154.7 538.5 155.3 541.1 155.9C543.7 156.5 545.2 156.9 547.2 156.7C549.2 156.4 551.0 155.6 553.3 154.4C555.6 153.2 559.7 150.6 561.0 149.8" stroke-width="6.50"/>
<path d="M510.6 123.8C510.6 125.8 509.9 132.0 510.6 136.1C511.4 140.2 513.6 144.5 515.1 148.3C516.6 152.1 518.9 157.2 519.7 159.0" stroke-width="5.50"/>
<path d="M521.3 128.4C521.5 130.7 522.0 138.4 522.8 142.2C523.5 146.0 525.3 149.8 525.8 151.3" stroke-width="4.00"/>
<path d="M509.0 134.5C507.5 135.0 502.9 136.1 499.9 137.6C496.8 139.1 493.0 141.1 490.7 143.7C488.4 146.2 486.7 150.6 486.1 152.9C485.5 155.2 486.8 156.7 486.9 157.4" stroke-width="7.50"/>
<path d="M507.5 139.1C506.0 140.1 500.6 142.6 498.3 145.2C496.0 147.8 494.6 152.9 493.8 154.4" stroke-width="4.50"/>
<path d="M530.4 128.4C531.3 128.4 534.0 128.3 536.0 128.4C538.0 128.5 541.5 129.1 542.6 129.2" stroke-width="4.50"/>
<path d="M553.3 129.2C554.2 129.0 557.0 128.2 559.0 128.0C561.0 127.8 564.5 127.8 565.6 127.7" stroke-width="4.50"/>
<path d="M554.1 138.6C554.1 138.8 554.1 139.8 554.1 140.0" stroke-width="4.50"/>
<path d="M541.1 147.5C541.9 147.6 544.5 147.8 546.0 147.8C547.5 147.8 549.6 147.6 550.3 147.5" stroke-width="4.00"/>
<path d="M523.5 112.5C524.2 113.2 527.2 116.2 528.0 117.0" stroke-width="4.50"/>
<path d="M528.0 112.5C527.2 113.2 524.2 116.2 523.5 117.0" stroke-width="4.50"/>
<path d="M527.0 111.0C527.0 111.0 527.2 111.2 527.3 111.3" stroke-width="6.50"/>
<path d="M522.5 114.0C522.5 114.0 522.7 114.2 522.7 114.3" stroke-width="6.00"/>
<path d="M525.0 118.5C525.0 118.5 525.2 118.8 525.3 118.8" stroke-width="6.00"/>
<path d="M529.0 116.5C529.0 116.5 529.2 116.8 529.2 116.8" stroke-width="5.50"/>
<path d="M528.9 155.9C529.1 157.2 530.1 162.3 530.4 163.6" stroke-width="4.50"/>
<path d="M538.1 155.9C538.6 157.2 540.6 162.3 541.1 163.6" stroke-width="4.50"/>
<path d="M499.9 154.4C500.4 155.9 502.4 162.1 502.9 163.6" stroke-width="4.00"/>
<path d="M561.0 95.0C562.8 97.8 569.2 106.2 572.0 112.0C574.8 117.8 577.5 124.8 578.0 130.0C578.5 135.2 575.5 140.8 575.0 143.0" stroke-width="4.00"/>
<path d="M514.0 110.0C515.0 108.0 517.3 101.3 520.0 98.0C522.7 94.7 528.3 91.3 530.0 90.0" stroke-width="3.50"/>
<path d="M505.0 160.0C506.2 161.0 510.8 165.0 512.0 166.0" stroke-width="4.50"/>
<path d="M489.0 160.0C490.3 160.5 495.7 162.5 497.0 163.0" stroke-width="4.00"/>
<path d="M477.2 167.0C481.0 166.7 491.8 165.6 499.9 165.2C508.0 164.8 517.4 164.4 526.1 164.4C534.8 164.4 542.7 164.8 552.3 165.2C561.9 165.6 578.5 166.7 583.7 167.0" stroke-width="11.00"/>
<path d="M510.0 172.0C509.8 175.8 508.7 187.0 508.5 195.0C508.3 203.0 509.2 212.5 509.0 220.0C508.8 227.5 507.8 235.3 507.0 240.0C506.2 244.7 504.5 246.7 504.0 248.0" stroke-width="10.00"/>
<path d="M476.5 255.4C477.2 255.5 480.2 255.7 481.0 255.8" stroke-width="4.00"/>
<path d="M486.0 256.5C487.5 256.6 493.5 256.9 495.0 257.0" stroke-width="4.00"/>
<path d="M548.0 172.0C549.3 174.7 553.5 182.3 556.0 188.0C558.5 193.7 562.3 199.3 563.0 206.0C563.7 212.7 560.5 224.3 560.0 228.0" stroke-width="4.00"/>
<path d="M577.0 176.0C578.0 177.3 582.2 180.0 583.0 184.0C583.8 188.0 582.2 197.3 582.0 200.0" stroke-width="4.50"/>
<path d="M496.4 170.5C494.6 171.1 488.4 171.7 485.9 174.0C483.4 176.3 482.5 180.6 481.6 184.4C480.7 188.2 480.9 194.6 480.7 196.6" stroke-width="6.50"/>
<path d="M475.5 199.3C478.1 198.9 485.7 197.1 491.2 196.6C496.7 196.1 505.7 196.6 508.6 196.6" stroke-width="11.00"/>
<path d="M475.5 201.9C478.1 202.5 485.4 205.2 491.2 205.4C497.0 205.6 507.2 203.2 510.4 202.8" stroke-width="9.00"/>
<path d="M482.5 205.4C482.4 209.5 482.2 219.9 481.6 229.8C481.0 239.7 479.9 256.4 479.0 264.7C478.1 273.0 476.4 277.0 475.9 279.5" stroke-width="6.50"/>
<path d="M505.1 207.1C504.7 211.5 503.1 226.6 502.5 233.3C501.9 240.0 501.8 245.0 501.6 247.3" stroke-width="6.50"/>
<path d="M571.5 175.7C572.6 176.0 576.9 176.3 578.4 177.5C579.9 178.7 579.9 181.8 580.2 182.7" stroke-width="6.00"/>
<path d="M580.2 187.9C580.2 192.0 580.8 204.0 580.2 212.4C579.6 220.8 577.6 232.1 576.7 238.5C575.8 244.9 575.2 248.8 574.9 250.8" stroke-width="7.00"/>
<path d="M513.9 236.8C520.0 236.9 541.2 237.5 550.5 237.5C559.8 237.5 566.5 236.9 569.7 236.8" stroke-width="8.00"/>
<path d="M517.4 238.5C517.2 240.0 516.6 245.8 516.5 247.3" stroke-width="4.50"/>
<path d="M512.1 249.9C515.9 250.3 525.8 251.8 534.8 252.5C543.8 253.2 561.0 253.9 566.2 254.2" stroke-width="11.00"/>
<path d="M503.0 267.0C502.2 272.5 499.6 287.2 498.0 300.0C496.4 312.8 494.2 336.7 493.5 344.0" stroke-width="4.00"/>
<path d="M492.9 343.4C496.6 342.5 507.6 339.1 515.2 338.0C522.8 336.9 530.8 337.0 538.6 337.0C546.4 337.0 554.9 336.6 562.1 338.0C569.3 339.4 578.7 344.4 582.0 345.7" stroke-width="7.00"/>
<path d="M582.0 345.0C582.2 345.8 582.8 349.2 583.0 350.0" stroke-width="6.00"/>
<path d="M493.0 344.0C492.7 344.5 491.3 346.5 491.0 347.0" stroke-width="6.00"/>
<path d="M477.9 240.0C477.6 243.3 477.2 251.6 475.9 259.9C474.6 268.2 471.9 281.2 469.9 289.8C467.9 298.4 465.2 307.1 463.9 311.7C462.6 316.3 457.0 317.4 462.0 317.7C467.0 318.0 488.5 314.4 493.8 313.7" stroke-width="7.00"/>
<path d="M466.0 300.0C465.7 302.2 464.3 310.8 464.0 313.0" stroke-width="4.50"/>
<path d="M494.8 255.9C495.3 263.2 497.5 289.8 497.8 299.8C498.1 309.8 497.0 313.1 496.8 315.7" stroke-width="6.50"/>
<path d="M477.9 321.7C478.2 323.7 477.9 331.0 479.9 333.6C481.9 336.2 488.1 336.9 489.8 337.6" stroke-width="5.00"/>
<path d="M567.5 252.0C569.2 254.7 573.9 261.3 577.5 267.9C581.1 274.5 586.8 286.5 589.4 291.8C592.0 297.1 590.7 297.8 593.4 299.8C596.1 301.8 606.1 302.7 605.4 303.7C604.7 304.7 592.1 305.4 589.4 305.7" stroke-width="6.50"/>
<path d="M585.5 305.7C586.8 306.7 592.8 309.0 593.4 311.7C594.0 314.4 590.1 320.0 589.4 321.7" stroke-width="7.00"/>
<path d="M510.0 257.7C515.0 257.6 530.6 257.0 540.0 257.0C549.4 257.0 561.8 257.6 566.2 257.7" stroke-width="9.00"/>
<path d="M502.8 342.0C502.3 346.6 500.5 359.2 499.8 369.8C499.1 380.4 499.8 395.7 498.8 405.7C497.8 415.7 495.3 422.2 493.8 429.6C492.3 437.0 492.0 440.5 489.8 449.9C487.6 459.2 482.4 479.7 480.9 485.7" stroke-width="5.50"/>
<path d="M539.6 342.0C538.0 348.3 532.7 370.2 529.7 379.8C526.7 389.4 524.4 392.1 521.7 399.7C519.0 407.3 516.0 417.2 513.7 425.6C511.4 434.0 510.5 439.2 507.8 449.9C505.1 460.6 499.5 483.1 497.8 489.7" stroke-width="5.50"/>
<path d="M541.6 342.0C540.6 347.3 536.0 365.2 535.7 373.8C535.4 382.4 539.3 386.1 539.6 393.7C539.9 401.3 538.2 410.2 537.6 419.6C537.0 429.0 536.0 439.5 535.7 449.9C535.4 460.3 535.7 476.5 535.7 481.8" stroke-width="5.00"/>
<path d="M571.5 342.0C570.8 346.6 569.1 360.5 567.5 369.8C565.9 379.1 563.2 389.4 561.6 397.7C560.0 406.0 558.9 410.9 557.6 419.6C556.3 428.3 555.1 439.5 553.6 449.9C552.1 460.3 549.4 476.5 548.6 481.8" stroke-width="5.50"/>
<path d="M509.8 399.7C509.5 402.4 508.1 413.0 507.8 415.7" stroke-width="4.00"/>
<path d="M547.6 385.8C547.3 389.1 545.9 402.4 545.6 405.7" stroke-width="4.00"/>
<path d="M567.5 350.0C567.2 352.6 565.8 363.2 565.5 365.9" stroke-width="10.00"/>
<path d="M486.0 494.0C487.3 493.8 492.2 492.7 494.0 493.0C495.8 493.3 496.5 495.5 497.0 496.0" stroke-width="5.50"/>
<path d="M488.0 503.0C489.0 502.7 492.5 501.0 494.0 501.0C495.5 501.0 496.5 502.7 497.0 503.0" stroke-width="4.50"/>
<path d="M538.0 493.0C539.7 492.7 546.3 491.3 548.0 491.0" stroke-width="6.50"/>
<path d="M540.0 502.0C541.5 501.5 547.5 499.5 549.0 499.0" stroke-width="4.50"/>
<path d="M479.0 490.0C479.2 489.3 479.8 486.7 480.0 486.0" stroke-width="6.00"/>
</g></g></svg>
<div class="a" style="left:910px;top:547px;width:66px;height:56px;border:2px solid #1fd21f"></div>
<div class="a" style="left:925px;top:547px;width:36px;height:2px;background:#c070c8"></div>

</body></html>
